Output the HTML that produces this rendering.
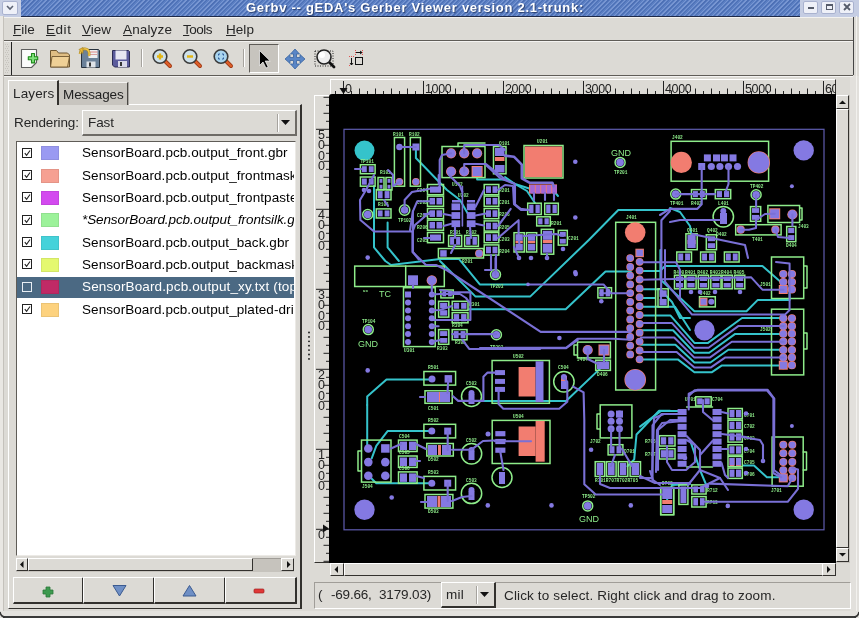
<!DOCTYPE html><html><head><meta charset="utf-8"><style>
*{margin:0;padding:0;box-sizing:border-box}
html,body{width:859px;height:618px;overflow:hidden;background:#dcdad5;font-family:"Liberation Sans",sans-serif;font-size:13.5px;color:#262626;position:relative}
.a{position:absolute;white-space:nowrap;will-change:transform}
.t{line-height:16px}
.bv{border:1px solid #fff;border-right-color:#6e6b66;border-bottom-color:#6e6b66}
.bi{border:1px solid #9d9a95;border-right-color:#fff;border-bottom-color:#fff}
u{text-decoration:underline;text-underline-offset:0.5px;text-decoration-thickness:1px}
</style></head><body><div class="a" style="left:0;top:0;width:859px;height:17px;background:#c5cde3"></div>
<div class="a" style="left:21px;top:0;width:779px;height:17px;background:repeating-linear-gradient(135deg,#5b7fc3 0 1.1px,#7896d2 1.1px 1.9px,#5b7fc3 1.9px 2.5px,#4d70b5 2.5px 3.3px);border-bottom:1px solid #1f2a48"></div>
<div class="a" style="left:4px;top:17px;width:849px;height:1px;background:#f3f2ef"></div>
<div class="a" style="left:2px;top:1px;width:16px;height:14px;background:#eef0f8;border:1px solid #a9b2cf;border-radius:2px"></div>
<svg class="a" style="left:0;top:0" width="22" height="16"><polyline points="7,6 10,9 13,6" fill="none" stroke="#5c6373" stroke-width="1.6"/></svg>
<div class="a" style="left:803px;top:1px;width:15px;height:13px;background:#eef0f8;border:1px solid #a9b2cf;border-radius:2px"></div>
<div class="a" style="left:821px;top:1px;width:15px;height:13px;background:#eef0f8;border:1px solid #a9b2cf;border-radius:2px"></div>
<div class="a" style="left:839px;top:1px;width:15px;height:13px;background:#eef0f8;border:1px solid #a9b2cf;border-radius:2px"></div>
<svg class="a" style="left:800px;top:0" width="59" height="16"><rect x="8" y="7" width="6" height="2" fill="#555b6a"/><rect x="26.5" y="4.5" width="6" height="5" fill="none" stroke="#555b6a" stroke-width="1"/><rect x="26" y="4" width="7" height="2" fill="#555b6a"/><path d="M44,4 L50,10 M50,4 L44,10" stroke="#555b6a" stroke-width="1.8"/></svg>
<div class="a" style="left:246px;top:0;font-weight:bold;font-size:13px;line-height:15px;color:#fff;letter-spacing:0.72px;text-shadow:1px 1px 1px #2b4070">Gerbv -- gEDA's Gerber Viewer version 2.1-trunk:</div>
<div class="a" style="left:0;top:16px;width:4px;height:602px;background:#e9e7e3;border-right:1px solid #c4c1bb"></div>
<div class="a" style="left:850px;top:76px;width:9px;height:542px;background:#e2e0dc"></div>
<div class="a" style="left:856px;top:16px;width:1px;height:600px;background:#f2f1ee"></div>
<div class="a" style="left:853px;top:17px;width:1px;height:58px;background:#444"></div>
<div class="a" style="left:0;top:611px;width:859px;height:7px;background:#e4e2de"></div>
<div class="a" style="left:3px;top:616px;width:853px;height:2px;background:#3a3a3a"></div>
<svg class="a" style="left:0;top:608px" width="859" height="10"><path d="M0,4 Q1,9 5,9" fill="none" stroke="#333" stroke-width="1.5"/><path d="M859,4 Q858,9 854,9" fill="none" stroke="#333" stroke-width="1.5"/></svg>
<div class="a" style="left:4px;top:40px;width:849px;height:1px;background:#5f5c57"></div>
<div class="a" style="left:4px;top:41px;width:849px;height:1px;background:#f4f3f1"></div>
<div class="a t" style="left:13px;top:21.6px;letter-spacing:-0.03px"><u>F</u>ile</div>
<div class="a t" style="left:46px;top:21.6px;letter-spacing:0.55px"><u>E</u>dit</div>
<div class="a t" style="left:82px;top:21.6px;letter-spacing:0.03px"><u>V</u>iew</div>
<div class="a t" style="left:123px;top:21.6px;letter-spacing:0.15px"><u>A</u>nalyze</div>
<div class="a t" style="left:183px;top:21.6px;letter-spacing:-0.49px"><u>T</u>ools</div>
<div class="a t" style="left:226px;top:21.6px;letter-spacing:0.05px"><u>H</u>elp</div>
<div class="a" style="left:11px;top:42px;width:1px;height:33px;background:#222"></div>
<div class="a" style="left:4px;top:75px;width:849px;height:1px;background:#5f5c57"></div>
<div class="a" style="left:4px;top:76px;width:849px;height:1px;background:#f4f3f1"></div>
<svg class="a" style="left:4px;top:43px" width="7" height="31"><rect x="1" y="1" width="1" height="1" fill="#c6c3bd"/><rect x="3" y="1" width="1" height="1" fill="#c6c3bd"/><rect x="2" y="3" width="1" height="1" fill="#c6c3bd"/><rect x="4" y="3" width="1" height="1" fill="#c6c3bd"/><rect x="1" y="5" width="1" height="1" fill="#c6c3bd"/><rect x="3" y="5" width="1" height="1" fill="#c6c3bd"/><rect x="2" y="7" width="1" height="1" fill="#c6c3bd"/><rect x="4" y="7" width="1" height="1" fill="#c6c3bd"/><rect x="1" y="9" width="1" height="1" fill="#c6c3bd"/><rect x="3" y="9" width="1" height="1" fill="#c6c3bd"/><rect x="2" y="11" width="1" height="1" fill="#c6c3bd"/><rect x="4" y="11" width="1" height="1" fill="#c6c3bd"/><rect x="1" y="13" width="1" height="1" fill="#c6c3bd"/><rect x="3" y="13" width="1" height="1" fill="#c6c3bd"/><rect x="2" y="15" width="1" height="1" fill="#c6c3bd"/><rect x="4" y="15" width="1" height="1" fill="#c6c3bd"/><rect x="1" y="17" width="1" height="1" fill="#c6c3bd"/><rect x="3" y="17" width="1" height="1" fill="#c6c3bd"/><rect x="2" y="19" width="1" height="1" fill="#c6c3bd"/><rect x="4" y="19" width="1" height="1" fill="#c6c3bd"/><rect x="1" y="21" width="1" height="1" fill="#c6c3bd"/><rect x="3" y="21" width="1" height="1" fill="#c6c3bd"/><rect x="2" y="23" width="1" height="1" fill="#c6c3bd"/><rect x="4" y="23" width="1" height="1" fill="#c6c3bd"/><rect x="1" y="25" width="1" height="1" fill="#c6c3bd"/><rect x="3" y="25" width="1" height="1" fill="#c6c3bd"/><rect x="2" y="27" width="1" height="1" fill="#c6c3bd"/><rect x="4" y="27" width="1" height="1" fill="#c6c3bd"/><rect x="1" y="29" width="1" height="1" fill="#c6c3bd"/><rect x="3" y="29" width="1" height="1" fill="#c6c3bd"/></svg>
<div class="a" style="left:141px;top:49px;width:1px;height:18px;background:#a6a39e;border-right:1px solid #fff;width:2px"></div>
<div class="a" style="left:243px;top:49px;width:1px;height:18px;background:#a6a39e;border-right:1px solid #fff;width:2px"></div>
<div class="a" style="left:249px;top:44px;width:30px;height:29px;background:#c7c4be;border:1px solid #5e5b57;border-right-color:#fff;border-bottom-color:#fff"></div>

<svg class="a" style="left:0;top:40px" width="380" height="36">
 <!-- new -->
 <path d="M21.5,9.5 h15 v13 l-5,5 h-10 z" fill="#fbfbfb" stroke="#5e5e5e" stroke-width="1.1" stroke-linejoin="round"/>
 <path d="M31.5,13.5 h3 v3.2 h3.2 v3 h-3.2 v3.2 h-3 v-3.2 h-3.2 v-3 h3.2 z" fill="#7ee07a" stroke="#1f8a1a" stroke-width="1.1" stroke-linejoin="round"/>
 <!-- open folder -->
 <path d="M50.5,10.5 h6 l2,2.5 h9 l2,2 v12 h-19 z" fill="#e0be84" stroke="#6e5630" stroke-width="1" stroke-linejoin="round"/>
 <path d="M52,16.5 h17.5 l-2,10.5 h-17 z" fill="#efd096" stroke="#6e5630" stroke-width="0.9" stroke-linejoin="round"/>
 <!-- revert -->
 <path d="M81.5,9.5 h17 l1,1 v17 h-18 z" fill="#6b8199" stroke="#28323e" stroke-width="1"/>
 <rect x="88.5" y="10" width="9" height="8" fill="#eeeef0"/>
 <rect x="88.5" y="11.5" width="9" height="1" fill="#d88"/>
 <rect x="88.5" y="14" width="9" height="1" fill="#d9a0a0"/>
 <rect x="86.5" y="21.5" width="9" height="6" fill="#dfe3e8"/>
 <rect x="89" y="22.5" width="2" height="4" fill="#333"/>
 <path d="M80,14 q1,-6 6,-5 q4,1 3,7" fill="none" stroke="#b08a20" stroke-width="2.6"/>
 <path d="M80,14 q1,-6 6,-5 q4,1 3,7" fill="none" stroke="#f0c850" stroke-width="1.4"/>
 <path d="M79,9.5 l4,-2 l0,6 z" fill="#e8b838" stroke="#a07818" stroke-width="0.6"/>
 <!-- save -->
 <path d="M112.5,10.5 h16 l1,1 v15.5 h-15 l-2,-2 z" fill="#5b5b9c" stroke="#2c2c54" stroke-width="1"/>
 <rect x="115.5" y="10.5" width="11" height="9" fill="#e6e6f2"/>
 <rect x="118" y="21" width="9" height="6" fill="#d8d8e8"/>
 <rect x="120" y="22" width="2" height="4" fill="#333"/>
 <!-- zoom in/out/fit -->
 <g id="z1">
  <line x1="165" y1="21" x2="170" y2="26" stroke="#a13b17" stroke-width="4" stroke-linecap="round"/>
  <line x1="165" y1="21" x2="170" y2="26" stroke="#e0602a" stroke-width="2.2" stroke-linecap="round"/>
  <circle cx="160" cy="16.5" r="6.8" fill="#cfe1ea" stroke="#3a3a3a" stroke-width="1.6"/>
  <path d="M157,16.5 h6 M160,13.5 v6" stroke="#e2b514" stroke-width="2.4"/>
 </g>
 <line x1="195" y1="21" x2="200" y2="26" stroke="#a13b17" stroke-width="4" stroke-linecap="round"/>
 <line x1="195" y1="21" x2="200" y2="26" stroke="#e0602a" stroke-width="2.2" stroke-linecap="round"/>
 <circle cx="190" cy="16.5" r="6.8" fill="#cfe1ea" stroke="#3a3a3a" stroke-width="1.6"/>
 <path d="M187,16.5 h6" stroke="#e2b514" stroke-width="2.4"/>
 <line x1="226" y1="21" x2="231" y2="26" stroke="#a13b17" stroke-width="4" stroke-linecap="round"/>
 <line x1="226" y1="21" x2="231" y2="26" stroke="#e0602a" stroke-width="2.2" stroke-linecap="round"/>
 <circle cx="221" cy="16.5" r="6.8" fill="#a9d4ee" stroke="#3a3a3a" stroke-width="1.6"/>
 <path d="M218.5,15.5 v-1.5 h1.5 M222,14 h1.5 v1.5 M223.5,17.5 v1.5 h-1.5 M220,19 h-1.5 v-1.5" fill="none" stroke="#2f5f9f" stroke-width="1"/>
 <!-- pointer -->
 <path d="M259.5,10.5 v15 l3.5,-3.5 l3,6 l2.2,-1 l-3,-6 h5 z" fill="#000" stroke="#fff" stroke-width="0.7"/>
 <!-- move -->
 <path d="M295,9 l4.5,5 h-3 v3.5 h3.5 v-3 l5,4.5 l-5,4.5 v-3 h-3.5 v3.5 h3 l-4.5,5 l-4.5,-5 h3 v-3.5 h-3.5 v3 l-5,-4.5 l5,-4.5 v3 h3.5 v-3.5 h-3 z" fill="#5a86c6" stroke="#3a64a0" stroke-width="0.8" stroke-linejoin="round"/>
 <!-- zoom area -->
 <rect x="315" y="11" width="18" height="15" fill="none" stroke="#222" stroke-width="1" stroke-dasharray="1,1.5"/>
 <line x1="329" y1="22" x2="334" y2="27" stroke="#111" stroke-width="2.8" stroke-linecap="round"/>
 <circle cx="324" cy="17" r="7" fill="#eeeeee" stroke="#222" stroke-width="1.6"/>
 <circle cx="322" cy="15" r="3" fill="#fff"/>
 <!-- measure -->
 <rect x="355.5" y="17.5" width="7" height="7" fill="none" stroke="#111" stroke-width="1"/>
 <path d="M356,12.5 h6 M360,11 l2,1.5 l-2,1.5" fill="none" stroke="#111" stroke-width="1"/>
 <path d="M351.5,18 v7 M350,23 l1.5,2 l1.5,-2" fill="none" stroke="#111" stroke-width="1"/>
 <path d="M355.5,10 v6 M362.5,10 v6 M349,16.5 h6 M349,25.5 h2" stroke="#e03030" stroke-width="0.8" stroke-dasharray="1,1"/>
</svg>

<div class="a" style="left:8px;top:104px;width:294px;height:505px;border:1px solid #fff;border-right-color:#33312e;border-bottom-color:#33312e;border-right-width:2px;border-bottom-width:1px"></div>
<div class="a" style="left:58px;top:82px;width:70px;height:23px;background:#c8c5bf;border-top:1px solid #f4f3f1;border-right:1px solid #4a4844;box-shadow:1px 0 0 #a8a5a0"></div>
<div class="a" style="left:8px;top:80px;width:51px;height:25px;background:#dcdad5;border-left:1px solid #fff;border-top:1px solid #fff;border-right:2px solid #33312e"></div>
<div class="a t" style="left:13px;top:85.5px;letter-spacing:0.15px">Layers</div>
<div class="a t" style="left:63px;top:86.5px;letter-spacing:-0.12px;color:#222">Messages</div>
<div class="a t" style="left:14px;top:114.8px;letter-spacing:-0.12px">Rendering:</div>
<div class="a bv" style="left:82px;top:110px;width:215px;height:26px;border-bottom-width:2px;border-right-width:2px"></div>
<div class="a t" style="left:88px;top:114.8px;letter-spacing:-0.12px">Fast</div>
<div class="a" style="left:277px;top:114px;height:18px;background:#a6a39e;border-right:1px solid #fff;width:2px"></div>
<svg class="a" style="left:280px;top:118px" width="12" height="8"><path d="M1,2 h9 l-4.5,5 z" fill="#111"/></svg>
<div class="a" style="left:16px;top:141px;width:280px;height:415px;background:#fff;border:1px solid #5f5c57;border-right-color:#eceae6;border-bottom-color:#eceae6"></div>
<div class="a" style="left:17px;top:277px;width:277px;height:21px;background:#4b6983"></div>
<div class="a" style="left:17px;top:141px;width:277px;height:414px;overflow:hidden">
<div class="a" style="left:5px;top:6.7px;width:10px;height:10px;border:1px solid #222;background:#fff"></div>
<svg class="a" style="left:5px;top:6.7px" width="10" height="10"><path d="M2.8,5.2 L4.6,7.4 L8,2.5" fill="none" stroke="#222" stroke-width="1.1"/></svg>
<div class="a" style="left:24px;top:5.3px;width:18px;height:14px;background:#9a9af2;border:1px solid rgba(0,0,0,0.07)"></div>
<div class="a t" style="left:65px;top:4.3px;color:#000;letter-spacing:0.07px;">SensorBoard.pcb.output_front.gbr</div>
<div class="a" style="left:5px;top:29.1px;width:10px;height:10px;border:1px solid #222;background:#fff"></div>
<svg class="a" style="left:5px;top:29.1px" width="10" height="10"><path d="M2.8,5.2 L4.6,7.4 L8,2.5" fill="none" stroke="#222" stroke-width="1.1"/></svg>
<div class="a" style="left:24px;top:27.7px;width:18px;height:14px;background:#f6a092;border:1px solid rgba(0,0,0,0.07)"></div>
<div class="a t" style="left:65px;top:26.7px;color:#000;letter-spacing:0.07px;">SensorBoard.pcb.output_frontmask.gbr</div>
<div class="a" style="left:5px;top:51.4px;width:10px;height:10px;border:1px solid #222;background:#fff"></div>
<svg class="a" style="left:5px;top:51.4px" width="10" height="10"><path d="M2.8,5.2 L4.6,7.4 L8,2.5" fill="none" stroke="#222" stroke-width="1.1"/></svg>
<div class="a" style="left:24px;top:50.0px;width:18px;height:14px;background:#d34aef;border:1px solid rgba(0,0,0,0.07)"></div>
<div class="a t" style="left:65px;top:49.0px;color:#000;letter-spacing:0.07px;">SensorBoard.pcb.output_frontpaste.gbr</div>
<div class="a" style="left:5px;top:73.8px;width:10px;height:10px;border:1px solid #222;background:#fff"></div>
<svg class="a" style="left:5px;top:73.8px" width="10" height="10"><path d="M2.8,5.2 L4.6,7.4 L8,2.5" fill="none" stroke="#222" stroke-width="1.1"/></svg>
<div class="a" style="left:24px;top:72.4px;width:18px;height:14px;background:#9cf29a;border:1px solid rgba(0,0,0,0.07)"></div>
<div class="a t" style="left:65px;top:71.4px;color:#000;letter-spacing:-0.1px;font-style:italic;">*SensorBoard.pcb.output_frontsilk.gbr</div>
<div class="a" style="left:5px;top:96.1px;width:10px;height:10px;border:1px solid #222;background:#fff"></div>
<svg class="a" style="left:5px;top:96.1px" width="10" height="10"><path d="M2.8,5.2 L4.6,7.4 L8,2.5" fill="none" stroke="#222" stroke-width="1.1"/></svg>
<div class="a" style="left:24px;top:94.7px;width:18px;height:14px;background:#45d2da;border:1px solid rgba(0,0,0,0.07)"></div>
<div class="a t" style="left:65px;top:93.7px;color:#000;letter-spacing:0.07px;">SensorBoard.pcb.output_back.gbr</div>
<div class="a" style="left:5px;top:118.4px;width:10px;height:10px;border:1px solid #222;background:#fff"></div>
<svg class="a" style="left:5px;top:118.4px" width="10" height="10"><path d="M2.8,5.2 L4.6,7.4 L8,2.5" fill="none" stroke="#222" stroke-width="1.1"/></svg>
<div class="a" style="left:24px;top:117.1px;width:18px;height:14px;background:#e4f86e;border:1px solid rgba(0,0,0,0.07)"></div>
<div class="a t" style="left:65px;top:116.1px;color:#000;letter-spacing:0.07px;">SensorBoard.pcb.output_backmask.gbr</div>
<div class="a" style="left:5px;top:140.8px;width:10px;height:10px;border:1px solid #e8eef4;background:#4b6983"></div>
<div class="a" style="left:24px;top:139.4px;width:18px;height:14px;background:#c02a66;border:1px solid rgba(0,0,0,0.07)"></div>
<div class="a t" style="left:65px;top:138.4px;color:#fff;letter-spacing:0.13px;">SensorBoard.pcb.output_xy.txt (top)</div>
<div class="a" style="left:5px;top:163.1px;width:10px;height:10px;border:1px solid #222;background:#fff"></div>
<svg class="a" style="left:5px;top:163.1px" width="10" height="10"><path d="M2.8,5.2 L4.6,7.4 L8,2.5" fill="none" stroke="#222" stroke-width="1.1"/></svg>
<div class="a" style="left:24px;top:161.8px;width:18px;height:14px;background:#fdd27e;border:1px solid rgba(0,0,0,0.07)"></div>
<div class="a t" style="left:65px;top:160.8px;color:#000;letter-spacing:0.07px;">SensorBoard.pcb.output_plated-drill.cnc</div>
</div>
<div class="a" style="left:16px;top:558px;width:278px;height:14px;background:#c6c3bd;border-top:1px solid #a09d98"></div>
<div class="a bv" style="left:16px;top:558px;width:12px;height:13px;background:#dcdad5;border-right-color:#33312e;border-bottom-color:#33312e"></div>
<div class="a bv" style="left:28px;top:558px;width:225px;height:13px;background:#dcdad5;border-right-color:#33312e;border-bottom-color:#33312e"></div>
<div class="a bv" style="left:281px;top:558px;width:13px;height:13px;background:#dcdad5;border-right-color:#33312e;border-bottom-color:#33312e"></div>
<svg class="a" style="left:16px;top:558px" width="278" height="13"><path d="M7.5,3 v7 l-3.5,-3.5 z" fill="#111"/><path d="M271,3 v7 l3.5,-3.5 z" fill="#111"/></svg>
<div class="a bv" style="left:13px;top:577px;width:71px;height:27px;border-right-color:#33312e;border-bottom-color:#33312e;border-bottom-width:2px;border-right-width:2px"></div>
<div class="a bv" style="left:83px;top:577px;width:72px;height:27px;border-right-color:#33312e;border-bottom-color:#33312e;border-bottom-width:2px;border-right-width:2px"></div>
<div class="a bv" style="left:154px;top:577px;width:72px;height:27px;border-right-color:#33312e;border-bottom-color:#33312e;border-bottom-width:2px;border-right-width:2px"></div>
<div class="a bv" style="left:225px;top:577px;width:72px;height:27px;border-right-color:#33312e;border-bottom-color:#33312e;border-bottom-width:2px;border-right-width:2px"></div>
<svg class="a" style="left:13px;top:577px" width="285" height="27"><path d="M33,10 h4 v3 h3 v4 h-3 v3 h-4 v-3 h-3 v-4 h3 z" fill="#3d9a4f" stroke="#2b7a3a" stroke-width="0.8"/><path d="M100,8.5 h13 l-6.5,10.5 z" fill="#6f8fc5" stroke="#3b5a90" stroke-width="1"/><path d="M170,19 h13 l-6.5,-10.5 z" fill="#6f8fc5" stroke="#3b5a90" stroke-width="1"/><rect x="241" y="12" width="10" height="4" rx="1" fill="#e03838" stroke="#a02020" stroke-width="0.7"/></svg>
<svg class="a" style="left:305px;top:330px" width="8" height="34"><circle cx="4" cy="2.5" r="0.9" fill="#111"/><circle cx="4" cy="6.9" r="0.9" fill="#111"/><circle cx="4" cy="11.3" r="0.9" fill="#111"/><circle cx="4" cy="15.7" r="0.9" fill="#111"/><circle cx="4" cy="20.1" r="0.9" fill="#111"/><circle cx="4" cy="24.5" r="0.9" fill="#111"/><circle cx="4" cy="28.9" r="0.9" fill="#111"/></svg>
<div class="a" style="left:329px;top:94px;width:507px;height:469px;background:#000;border-radius:3px 0 0 0"></div>
<div class="a" style="left:330px;top:79px;width:506px;height:15px;background:#dcdad5;border-top:1px solid #fff;border-left:1px solid #fff;border-right:1px solid #33312e"></div>
<div class="a" style="left:314px;top:95px;width:15px;height:468px;background:#dcdad5;border-left:1px solid #fff;border-top:1px solid #fff;border-bottom:1px solid #33312e"></div>
<div class="a" style="left:836px;top:95px;width:14px;height:468px;background:#c6c3bd"></div>
<div class="a bv" style="left:836px;top:95px;width:13px;height:14px;background:#dcdad5;border-right-color:#33312e;border-bottom-color:#33312e"></div>
<div class="a bv" style="left:836px;top:109px;width:13px;height:439px;background:#dcdad5;border-right-color:#33312e;border-bottom-color:#33312e"></div>
<div class="a bv" style="left:836px;top:548px;width:13px;height:14px;background:#dcdad5;border-right-color:#33312e;border-bottom-color:#33312e"></div>
<svg class="a" style="left:836px;top:95px" width="14" height="468"><path d="M3,9 h7 l-3.5,-3.5 z" fill="#111"/><path d="M3,458 h7 l-3.5,3.5 z" fill="#111"/></svg>
<div class="a" style="left:330px;top:563px;width:506px;height:13px;background:#c6c3bd"></div>
<div class="a bv" style="left:330px;top:563px;width:14px;height:13px;background:#dcdad5;border-right-color:#33312e;border-bottom-color:#33312e"></div>
<div class="a bv" style="left:344px;top:563px;width:479px;height:13px;background:#dcdad5;border-right-color:#33312e;border-bottom-color:#33312e"></div>
<div class="a bv" style="left:822px;top:563px;width:14px;height:13px;background:#dcdad5;border-right-color:#33312e;border-bottom-color:#33312e"></div>
<svg class="a" style="left:330px;top:563px" width="506" height="13"><path d="M8,3 v7 l-3.5,-3.5 z" fill="#111"/><path d="M497,3 v7 l3.5,-3.5 z" fill="#111"/></svg>
<svg class="a" style="left:330px;top:79px" width="506" height="15"><line x1="5.5" y1="12" x2="5.5" y2="15" stroke="#222" stroke-width="1"/><line x1="13.5" y1="2" x2="13.5" y2="15" stroke="#222" stroke-width="1"/><line x1="21.5" y1="12" x2="21.5" y2="15" stroke="#222" stroke-width="1"/><line x1="29.5" y1="9.5" x2="29.5" y2="15" stroke="#222" stroke-width="1"/><line x1="37.5" y1="12" x2="37.5" y2="15" stroke="#222" stroke-width="1"/><line x1="45.5" y1="9.5" x2="45.5" y2="15" stroke="#222" stroke-width="1"/><line x1="53.5" y1="12" x2="53.5" y2="15" stroke="#222" stroke-width="1"/><line x1="61.5" y1="9.5" x2="61.5" y2="15" stroke="#222" stroke-width="1"/><line x1="69.5" y1="12" x2="69.5" y2="15" stroke="#222" stroke-width="1"/><line x1="77.5" y1="9.5" x2="77.5" y2="15" stroke="#222" stroke-width="1"/><line x1="85.5" y1="12" x2="85.5" y2="15" stroke="#222" stroke-width="1"/><line x1="93.5" y1="2" x2="93.5" y2="15" stroke="#222" stroke-width="1"/><line x1="101.5" y1="12" x2="101.5" y2="15" stroke="#222" stroke-width="1"/><line x1="109.5" y1="9.5" x2="109.5" y2="15" stroke="#222" stroke-width="1"/><line x1="117.5" y1="12" x2="117.5" y2="15" stroke="#222" stroke-width="1"/><line x1="125.5" y1="9.5" x2="125.5" y2="15" stroke="#222" stroke-width="1"/><line x1="133.5" y1="12" x2="133.5" y2="15" stroke="#222" stroke-width="1"/><line x1="141.5" y1="9.5" x2="141.5" y2="15" stroke="#222" stroke-width="1"/><line x1="149.5" y1="12" x2="149.5" y2="15" stroke="#222" stroke-width="1"/><line x1="157.5" y1="9.5" x2="157.5" y2="15" stroke="#222" stroke-width="1"/><line x1="165.5" y1="12" x2="165.5" y2="15" stroke="#222" stroke-width="1"/><line x1="173.5" y1="2" x2="173.5" y2="15" stroke="#222" stroke-width="1"/><line x1="181.5" y1="12" x2="181.5" y2="15" stroke="#222" stroke-width="1"/><line x1="189.5" y1="9.5" x2="189.5" y2="15" stroke="#222" stroke-width="1"/><line x1="197.5" y1="12" x2="197.5" y2="15" stroke="#222" stroke-width="1"/><line x1="205.5" y1="9.5" x2="205.5" y2="15" stroke="#222" stroke-width="1"/><line x1="213.5" y1="12" x2="213.5" y2="15" stroke="#222" stroke-width="1"/><line x1="221.5" y1="9.5" x2="221.5" y2="15" stroke="#222" stroke-width="1"/><line x1="229.5" y1="12" x2="229.5" y2="15" stroke="#222" stroke-width="1"/><line x1="237.5" y1="9.5" x2="237.5" y2="15" stroke="#222" stroke-width="1"/><line x1="245.5" y1="12" x2="245.5" y2="15" stroke="#222" stroke-width="1"/><line x1="253.5" y1="2" x2="253.5" y2="15" stroke="#222" stroke-width="1"/><line x1="261.5" y1="12" x2="261.5" y2="15" stroke="#222" stroke-width="1"/><line x1="269.5" y1="9.5" x2="269.5" y2="15" stroke="#222" stroke-width="1"/><line x1="277.5" y1="12" x2="277.5" y2="15" stroke="#222" stroke-width="1"/><line x1="285.5" y1="9.5" x2="285.5" y2="15" stroke="#222" stroke-width="1"/><line x1="293.5" y1="12" x2="293.5" y2="15" stroke="#222" stroke-width="1"/><line x1="301.5" y1="9.5" x2="301.5" y2="15" stroke="#222" stroke-width="1"/><line x1="309.5" y1="12" x2="309.5" y2="15" stroke="#222" stroke-width="1"/><line x1="317.5" y1="9.5" x2="317.5" y2="15" stroke="#222" stroke-width="1"/><line x1="325.5" y1="12" x2="325.5" y2="15" stroke="#222" stroke-width="1"/><line x1="333.5" y1="2" x2="333.5" y2="15" stroke="#222" stroke-width="1"/><line x1="341.5" y1="12" x2="341.5" y2="15" stroke="#222" stroke-width="1"/><line x1="349.5" y1="9.5" x2="349.5" y2="15" stroke="#222" stroke-width="1"/><line x1="357.5" y1="12" x2="357.5" y2="15" stroke="#222" stroke-width="1"/><line x1="365.5" y1="9.5" x2="365.5" y2="15" stroke="#222" stroke-width="1"/><line x1="373.5" y1="12" x2="373.5" y2="15" stroke="#222" stroke-width="1"/><line x1="381.5" y1="9.5" x2="381.5" y2="15" stroke="#222" stroke-width="1"/><line x1="389.5" y1="12" x2="389.5" y2="15" stroke="#222" stroke-width="1"/><line x1="397.5" y1="9.5" x2="397.5" y2="15" stroke="#222" stroke-width="1"/><line x1="405.5" y1="12" x2="405.5" y2="15" stroke="#222" stroke-width="1"/><line x1="413.5" y1="2" x2="413.5" y2="15" stroke="#222" stroke-width="1"/><line x1="421.5" y1="12" x2="421.5" y2="15" stroke="#222" stroke-width="1"/><line x1="429.5" y1="9.5" x2="429.5" y2="15" stroke="#222" stroke-width="1"/><line x1="437.5" y1="12" x2="437.5" y2="15" stroke="#222" stroke-width="1"/><line x1="445.5" y1="9.5" x2="445.5" y2="15" stroke="#222" stroke-width="1"/><line x1="453.5" y1="12" x2="453.5" y2="15" stroke="#222" stroke-width="1"/><line x1="461.5" y1="9.5" x2="461.5" y2="15" stroke="#222" stroke-width="1"/><line x1="469.5" y1="12" x2="469.5" y2="15" stroke="#222" stroke-width="1"/><line x1="477.5" y1="9.5" x2="477.5" y2="15" stroke="#222" stroke-width="1"/><line x1="485.5" y1="12" x2="485.5" y2="15" stroke="#222" stroke-width="1"/><line x1="493.5" y1="2" x2="493.5" y2="15" stroke="#222" stroke-width="1"/><line x1="501.5" y1="12" x2="501.5" y2="15" stroke="#222" stroke-width="1"/></svg>
<div class="a" style="left:345.0px;top:83.3px;font-size:12.5px;line-height:12px;letter-spacing:-0.35px;color:#222;overflow:hidden;max-width:491px">0</div>
<div class="a" style="left:425.0px;top:83.3px;font-size:12.5px;line-height:12px;letter-spacing:-0.35px;color:#222;overflow:hidden;max-width:411px">1000</div>
<div class="a" style="left:505.0px;top:83.3px;font-size:12.5px;line-height:12px;letter-spacing:-0.35px;color:#222;overflow:hidden;max-width:331px">2000</div>
<div class="a" style="left:585.0px;top:83.3px;font-size:12.5px;line-height:12px;letter-spacing:-0.35px;color:#222;overflow:hidden;max-width:251px">3000</div>
<div class="a" style="left:665.0px;top:83.3px;font-size:12.5px;line-height:12px;letter-spacing:-0.35px;color:#222;overflow:hidden;max-width:171px">4000</div>
<div class="a" style="left:745.0px;top:83.3px;font-size:12.5px;line-height:12px;letter-spacing:-0.35px;color:#222;overflow:hidden;max-width:91px">5000</div>
<div class="a" style="left:825.0px;top:83.3px;font-size:12.5px;line-height:12px;letter-spacing:-0.35px;color:#222;overflow:hidden;max-width:11px">6000</div>
<svg class="a" style="left:338px;top:87px" width="12" height="8"><path d="M1.5,1 h8 l-4,6 z" fill="#111"/></svg>
<svg class="a" style="left:314px;top:95px" width="15" height="468"><line x1="9.5" y1="466.3" x2="15" y2="466.3" stroke="#222" stroke-width="1"/><line x1="12" y1="458.3" x2="15" y2="458.3" stroke="#222" stroke-width="1"/><line x1="9.5" y1="450.3" x2="15" y2="450.3" stroke="#222" stroke-width="1"/><line x1="12" y1="442.3" x2="15" y2="442.3" stroke="#222" stroke-width="1"/><line x1="2" y1="434.3" x2="15" y2="434.3" stroke="#222" stroke-width="1"/><line x1="12" y1="426.3" x2="15" y2="426.3" stroke="#222" stroke-width="1"/><line x1="9.5" y1="418.3" x2="15" y2="418.3" stroke="#222" stroke-width="1"/><line x1="12" y1="410.3" x2="15" y2="410.3" stroke="#222" stroke-width="1"/><line x1="9.5" y1="402.3" x2="15" y2="402.3" stroke="#222" stroke-width="1"/><line x1="12" y1="394.3" x2="15" y2="394.3" stroke="#222" stroke-width="1"/><line x1="9.5" y1="386.3" x2="15" y2="386.3" stroke="#222" stroke-width="1"/><line x1="12" y1="378.3" x2="15" y2="378.3" stroke="#222" stroke-width="1"/><line x1="9.5" y1="370.3" x2="15" y2="370.3" stroke="#222" stroke-width="1"/><line x1="12" y1="362.3" x2="15" y2="362.3" stroke="#222" stroke-width="1"/><line x1="2" y1="354.3" x2="15" y2="354.3" stroke="#222" stroke-width="1"/><line x1="12" y1="346.3" x2="15" y2="346.3" stroke="#222" stroke-width="1"/><line x1="9.5" y1="338.3" x2="15" y2="338.3" stroke="#222" stroke-width="1"/><line x1="12" y1="330.3" x2="15" y2="330.3" stroke="#222" stroke-width="1"/><line x1="9.5" y1="322.3" x2="15" y2="322.3" stroke="#222" stroke-width="1"/><line x1="12" y1="314.3" x2="15" y2="314.3" stroke="#222" stroke-width="1"/><line x1="9.5" y1="306.3" x2="15" y2="306.3" stroke="#222" stroke-width="1"/><line x1="12" y1="298.3" x2="15" y2="298.3" stroke="#222" stroke-width="1"/><line x1="9.5" y1="290.3" x2="15" y2="290.3" stroke="#222" stroke-width="1"/><line x1="12" y1="282.3" x2="15" y2="282.3" stroke="#222" stroke-width="1"/><line x1="2" y1="274.3" x2="15" y2="274.3" stroke="#222" stroke-width="1"/><line x1="12" y1="266.3" x2="15" y2="266.3" stroke="#222" stroke-width="1"/><line x1="9.5" y1="258.3" x2="15" y2="258.3" stroke="#222" stroke-width="1"/><line x1="12" y1="250.3" x2="15" y2="250.3" stroke="#222" stroke-width="1"/><line x1="9.5" y1="242.3" x2="15" y2="242.3" stroke="#222" stroke-width="1"/><line x1="12" y1="234.3" x2="15" y2="234.3" stroke="#222" stroke-width="1"/><line x1="9.5" y1="226.3" x2="15" y2="226.3" stroke="#222" stroke-width="1"/><line x1="12" y1="218.3" x2="15" y2="218.3" stroke="#222" stroke-width="1"/><line x1="9.5" y1="210.3" x2="15" y2="210.3" stroke="#222" stroke-width="1"/><line x1="12" y1="202.3" x2="15" y2="202.3" stroke="#222" stroke-width="1"/><line x1="2" y1="194.3" x2="15" y2="194.3" stroke="#222" stroke-width="1"/><line x1="12" y1="186.3" x2="15" y2="186.3" stroke="#222" stroke-width="1"/><line x1="9.5" y1="178.3" x2="15" y2="178.3" stroke="#222" stroke-width="1"/><line x1="12" y1="170.3" x2="15" y2="170.3" stroke="#222" stroke-width="1"/><line x1="9.5" y1="162.3" x2="15" y2="162.3" stroke="#222" stroke-width="1"/><line x1="12" y1="154.3" x2="15" y2="154.3" stroke="#222" stroke-width="1"/><line x1="9.5" y1="146.3" x2="15" y2="146.3" stroke="#222" stroke-width="1"/><line x1="12" y1="138.3" x2="15" y2="138.3" stroke="#222" stroke-width="1"/><line x1="9.5" y1="130.3" x2="15" y2="130.3" stroke="#222" stroke-width="1"/><line x1="12" y1="122.3" x2="15" y2="122.3" stroke="#222" stroke-width="1"/><line x1="2" y1="114.3" x2="15" y2="114.3" stroke="#222" stroke-width="1"/><line x1="12" y1="106.3" x2="15" y2="106.3" stroke="#222" stroke-width="1"/><line x1="9.5" y1="98.3" x2="15" y2="98.3" stroke="#222" stroke-width="1"/><line x1="12" y1="90.3" x2="15" y2="90.3" stroke="#222" stroke-width="1"/><line x1="9.5" y1="82.3" x2="15" y2="82.3" stroke="#222" stroke-width="1"/><line x1="12" y1="74.3" x2="15" y2="74.3" stroke="#222" stroke-width="1"/><line x1="9.5" y1="66.3" x2="15" y2="66.3" stroke="#222" stroke-width="1"/><line x1="12" y1="58.3" x2="15" y2="58.3" stroke="#222" stroke-width="1"/><line x1="9.5" y1="50.3" x2="15" y2="50.3" stroke="#222" stroke-width="1"/><line x1="12" y1="42.3" x2="15" y2="42.3" stroke="#222" stroke-width="1"/><line x1="2" y1="34.3" x2="15" y2="34.3" stroke="#222" stroke-width="1"/><line x1="12" y1="26.3" x2="15" y2="26.3" stroke="#222" stroke-width="1"/><line x1="9.5" y1="18.3" x2="15" y2="18.3" stroke="#222" stroke-width="1"/><line x1="12" y1="10.3" x2="15" y2="10.3" stroke="#222" stroke-width="1"/><line x1="9.5" y1="2.3" x2="15" y2="2.3" stroke="#222" stroke-width="1"/></svg>
<div class="a" style="left:316.5px;top:530.4px;font-size:12.5px;line-height:10.4px;color:#222;width:9px;text-align:center;white-space:normal">0</div>
<div class="a" style="left:316.5px;top:450.4px;font-size:12.5px;line-height:10.4px;color:#222;width:9px;text-align:center;white-space:normal">1<br>0<br>0<br>0</div>
<div class="a" style="left:316.5px;top:370.4px;font-size:12.5px;line-height:10.4px;color:#222;width:9px;text-align:center;white-space:normal">2<br>0<br>0<br>0</div>
<div class="a" style="left:316.5px;top:290.4px;font-size:12.5px;line-height:10.4px;color:#222;width:9px;text-align:center;white-space:normal">3<br>0<br>0<br>0</div>
<div class="a" style="left:316.5px;top:210.4px;font-size:12.5px;line-height:10.4px;color:#222;width:9px;text-align:center;white-space:normal">4<br>0<br>0<br>0</div>
<div class="a" style="left:316.5px;top:130.4px;font-size:12.5px;line-height:10.4px;color:#222;width:9px;text-align:center;white-space:normal">5<br>0<br>0<br>0</div>
<svg class="a" style="left:322px;top:523px" width="8" height="12"><path d="M1,1.5 v8 l6,-4 z" fill="#111"/></svg>
<div class="a bi" style="left:314px;top:582px;width:537px;height:27px;border-color:#a09d98;border-right-color:#fff;border-bottom-color:#fff"></div>
<div class="a t" style="left:318px;top:587px">(</div>
<div class="a t" style="left:331px;top:587px;letter-spacing:-0.2px">-69.66,</div>
<div class="a t" style="left:379px;top:587px;letter-spacing:-0.15px">3179.03)</div>
<div class="a bv" style="left:441px;top:582px;width:55px;height:26px;border-right-color:#33312e;border-bottom-color:#33312e;border-right-width:2px;border-bottom-width:2px"></div>
<div class="a t" style="left:446px;top:587px;letter-spacing:0.3px">mil</div>
<div class="a" style="left:476px;top:586px;width:2px;height:18px;background:#a6a39e;border-right:1px solid #fff"></div>
<svg class="a" style="left:479px;top:591px" width="12" height="8"><path d="M1,1 h9 l-4.5,5 z" fill="#111"/></svg>
<div class="a t" style="left:504px;top:587.5px;letter-spacing:0.145px">Click to select. Right click and drag to zoom.</div>
<svg class="a" style="left:329px;top:94px" width="507" height="469" viewBox="329 94 507 469">
<circle cx="364.5" cy="150.6" r="10.0" fill="#35c3cb"/>
<polyline points="415.9,150.0 415.9,158.0 447.0,190.0 460.0,200.0 468.0,214.0" fill="none" stroke="#35c3cb" stroke-width="2.0" stroke-linejoin="round" stroke-linecap="round"/>
<polyline points="477.1,171.5 477.1,179.4 505.0,179.4 515.0,184.0 527.0,191.0 535.0,203.0" fill="none" stroke="#35c3cb" stroke-width="2.0" stroke-linejoin="round" stroke-linecap="round"/>
<polyline points="374.0,186.0 374.0,247.4 385.3,261.0 391.0,265.0 440.0,258.9 458.9,258.9 479.8,284.4 528.0,284.4" fill="none" stroke="#35c3cb" stroke-width="2.0" stroke-linejoin="round" stroke-linecap="round"/>
<polyline points="440.0,261.0 475.6,296.6 530.1,296.6 588.8,240.0 618.3,210.0 670.0,210.0" fill="none" stroke="#35c3cb" stroke-width="2.0" stroke-linejoin="round" stroke-linecap="round"/>
<polyline points="387.6,222.5 387.6,247.4 398.9,261.0" fill="none" stroke="#35c3cb" stroke-width="2.0" stroke-linejoin="round" stroke-linecap="round"/>
<polyline points="469.3,309.2 565.7,309.2 605.5,271.4 630.8,271.4" fill="none" stroke="#35c3cb" stroke-width="2.0" stroke-linejoin="round" stroke-linecap="round"/>
<polyline points="505.0,177.0 515.0,184.0 534.0,190.0 553.0,190.0 558.0,196.0" fill="none" stroke="#35c3cb" stroke-width="2.0" stroke-linejoin="round" stroke-linecap="round"/>
<polyline points="670.0,208.0 680.0,212.0 690.0,226.0 692.0,238.0" fill="none" stroke="#35c3cb" stroke-width="2.0" stroke-linejoin="round" stroke-linecap="round"/>
<polyline points="641.0,315.6 670.6,315.6 694.4,342.9 708.0,342.9 742.0,318.0 783.5,318.0" fill="none" stroke="#35c3cb" stroke-width="2.0" stroke-linejoin="round" stroke-linecap="round"/>
<polyline points="641.0,330.2 673.0,330.2 694.4,352.7 709.2,352.7 735.2,333.9 783.5,333.9" fill="none" stroke="#35c3cb" stroke-width="2.0" stroke-linejoin="round" stroke-linecap="round"/>
<polyline points="641.0,344.8 675.4,344.8 694.4,362.5 710.4,362.5 728.4,349.7 783.5,349.7" fill="none" stroke="#35c3cb" stroke-width="2.0" stroke-linejoin="round" stroke-linecap="round"/>
<polyline points="641.0,359.4 677.8,359.4 694.4,372.3 711.6,372.3 721.6,365.6 783.5,365.6" fill="none" stroke="#35c3cb" stroke-width="2.0" stroke-linejoin="round" stroke-linecap="round"/>
<polyline points="641.0,271.0 660.0,271.0 665.0,266.0 762.4,265.9 780.5,281.7" fill="none" stroke="#35c3cb" stroke-width="2.0" stroke-linejoin="round" stroke-linecap="round"/>
<polyline points="660.4,250.0 660.4,279.5 694.4,311.2 746.5,311.2 757.8,299.9 789.6,299.9 789.6,284.0" fill="none" stroke="#35c3cb" stroke-width="2.0" stroke-linejoin="round" stroke-linecap="round"/>
<polyline points="641.0,289.3 660.0,289.3 672.0,302.0 680.0,318.0 690.0,318.0" fill="none" stroke="#35c3cb" stroke-width="2.0" stroke-linejoin="round" stroke-linecap="round"/>
<polyline points="641.0,298.1 655.0,298.1" fill="none" stroke="#35c3cb" stroke-width="2.0" stroke-linejoin="round" stroke-linecap="round"/>
<polyline points="641.0,306.8 675.0,306.8 690.0,330.0" fill="none" stroke="#35c3cb" stroke-width="2.0" stroke-linejoin="round" stroke-linecap="round"/>
<polyline points="472.9,400.9 566.1,401.0 606.9,362.1" fill="none" stroke="#35c3cb" stroke-width="2.0" stroke-linejoin="round" stroke-linecap="round"/>
<polyline points="367.2,405.0 367.2,396.5 386.5,379.5 431.8,379.5" fill="none" stroke="#35c3cb" stroke-width="2.0" stroke-linejoin="round" stroke-linecap="round"/>
<polyline points="367.2,405.0 367.2,444.7" fill="none" stroke="#35c3cb" stroke-width="2.0" stroke-linejoin="round" stroke-linecap="round"/>
<polyline points="371.7,458.3 376.3,445.8 387.6,431.1 431.8,431.1" fill="none" stroke="#35c3cb" stroke-width="2.0" stroke-linejoin="round" stroke-linecap="round"/>
<polyline points="371.7,478.7 376.3,483.2 431.8,483.2" fill="none" stroke="#35c3cb" stroke-width="2.0" stroke-linejoin="round" stroke-linecap="round"/>
<polyline points="670.0,410.7 659.1,410.7 636.5,434.5 634.2,459.4 627.4,466.2" fill="none" stroke="#35c3cb" stroke-width="2.0" stroke-linejoin="round" stroke-linecap="round"/>
<polyline points="743.6,465.5 754.0,465.5 766.9,477.2 781.2,477.2" fill="none" stroke="#35c3cb" stroke-width="2.0" stroke-linejoin="round" stroke-linecap="round"/>
<polyline points="640.0,426.6 660.7,411.1 677.6,411.1" fill="none" stroke="#35c3cb" stroke-width="2.0" stroke-linejoin="round" stroke-linecap="round"/>
<polyline points="690.0,440.0 700.0,470.0 706.9,486.5" fill="none" stroke="#35c3cb" stroke-width="2.0" stroke-linejoin="round" stroke-linecap="round"/>
<polyline points="667.0,500.0 672.0,485.0 690.0,484.0" fill="none" stroke="#35c3cb" stroke-width="2.0" stroke-linejoin="round" stroke-linecap="round"/>
<rect x="394.4" y="137.5" width="10.2" height="48.7" fill="none" stroke="#8eec8a" stroke-width="1.5"/>
<text x="393.0" y="136.0" font-size="4.5" fill="#8eec8a" font-family="Liberation Mono" font-weight="bold">R101</text>
<rect x="410.3" y="137.5" width="10.2" height="48.7" fill="none" stroke="#8eec8a" stroke-width="1.5"/>
<text x="409.0" y="136.0" font-size="4.5" fill="#8eec8a" font-family="Liberation Mono" font-weight="bold">R102</text>
<rect x="442.0" y="146.5" width="43.0" height="31.1" fill="none" stroke="#8eec8a" stroke-width="1.5"/>
<polyline points="458.0,146.5 458.0,143.0 485.0,143.0" fill="none" stroke="#8eec8a" stroke-width="1.5" stroke-linejoin="round" stroke-linecap="round"/>
<text x="452.0" y="186.0" font-size="4.5" fill="#8eec8a" font-family="Liberation Mono" font-weight="bold">U102</text>
<rect x="360.4" y="164.7" width="14.7" height="9.0" fill="none" stroke="#8eec8a" stroke-width="1.5"/>
<text x="360.4" y="163.2" font-size="4.5" fill="#8eec8a" font-family="Liberation Mono" font-weight="bold">TP101</text>
<rect x="360.4" y="177.0" width="14.7" height="9.2" fill="none" stroke="#8eec8a" stroke-width="1.5"/>
<rect x="378.0" y="177.5" width="6.0" height="12.5" fill="none" stroke="#8eec8a" stroke-width="1.5"/>
<rect x="386.0" y="177.5" width="6.0" height="12.5" fill="none" stroke="#8eec8a" stroke-width="1.5"/>
<text x="380.0" y="174.0" font-size="4.5" fill="#8eec8a" font-family="Liberation Mono" font-weight="bold">R103</text>
<rect x="376.3" y="189.6" width="14.7" height="10.2" fill="none" stroke="#8eec8a" stroke-width="1.5"/>
<rect x="376.3" y="208.9" width="14.7" height="9.1" fill="none" stroke="#8eec8a" stroke-width="1.5"/>
<text x="378.0" y="206.0" font-size="4.5" fill="#8eec8a" font-family="Liberation Mono" font-weight="bold">R104</text>
<circle cx="367.7" cy="214.5" r="5.0" fill="none" stroke="#8eec8a" stroke-width="1.5"/>
<circle cx="404.6" cy="210.0" r="5.2" fill="none" stroke="#8eec8a" stroke-width="1.5"/>
<text x="398.0" y="222.0" font-size="4.5" fill="#8eec8a" font-family="Liberation Mono" font-weight="bold">TP102</text>
<circle cx="495.5" cy="274.6" r="5.0" fill="none" stroke="#8eec8a" stroke-width="1.5"/>
<text x="490.0" y="288.0" font-size="4.5" fill="#8eec8a" font-family="Liberation Mono" font-weight="bold">TP203</text>
<rect x="427.5" y="184.5" width="16.0" height="10.2" fill="none" stroke="#8eec8a" stroke-width="1.5"/>
<rect x="427.5" y="196.1" width="16.0" height="10.2" fill="none" stroke="#8eec8a" stroke-width="1.5"/>
<rect x="427.5" y="208.5" width="16.0" height="10.2" fill="none" stroke="#8eec8a" stroke-width="1.5"/>
<rect x="427.5" y="220.1" width="16.0" height="10.2" fill="none" stroke="#8eec8a" stroke-width="1.5"/>
<rect x="427.5" y="232.5" width="16.0" height="10.2" fill="none" stroke="#8eec8a" stroke-width="1.5"/>
<text x="417.0" y="192.0" font-size="4.5" fill="#8eec8a" font-family="Liberation Mono" font-weight="bold">C204</text>
<text x="417.0" y="204.0" font-size="4.5" fill="#8eec8a" font-family="Liberation Mono" font-weight="bold">C202</text>
<text x="417.0" y="217.0" font-size="4.5" fill="#8eec8a" font-family="Liberation Mono" font-weight="bold">C203</text>
<text x="417.0" y="229.0" font-size="4.5" fill="#8eec8a" font-family="Liberation Mono" font-weight="bold">R206</text>
<text x="417.0" y="242.0" font-size="4.5" fill="#8eec8a" font-family="Liberation Mono" font-weight="bold">C205</text>
<text x="458.0" y="197.0" font-size="4.5" fill="#8eec8a" font-family="Liberation Mono" font-weight="bold">U202</text>
<rect x="448.6" y="235.4" width="13.1" height="10.9" fill="none" stroke="#8eec8a" stroke-width="1.5"/>
<rect x="464.6" y="235.4" width="13.8" height="10.9" fill="none" stroke="#8eec8a" stroke-width="1.5"/>
<text x="450.0" y="234.0" font-size="4.5" fill="#8eec8a" font-family="Liberation Mono" font-weight="bold">R301</text>
<text x="466.0" y="234.0" font-size="4.5" fill="#8eec8a" font-family="Liberation Mono" font-weight="bold">R302</text>
<rect x="484.2" y="184.5" width="14.6" height="10.2" fill="none" stroke="#8eec8a" stroke-width="1.5"/>
<rect x="484.2" y="196.1" width="14.6" height="10.2" fill="none" stroke="#8eec8a" stroke-width="1.5"/>
<rect x="484.2" y="208.5" width="14.6" height="10.2" fill="none" stroke="#8eec8a" stroke-width="1.5"/>
<rect x="484.2" y="220.9" width="14.6" height="10.2" fill="none" stroke="#8eec8a" stroke-width="1.5"/>
<rect x="484.2" y="232.5" width="14.6" height="10.2" fill="none" stroke="#8eec8a" stroke-width="1.5"/>
<rect x="484.2" y="244.9" width="14.6" height="10.2" fill="none" stroke="#8eec8a" stroke-width="1.5"/>
<text x="499.0" y="192.0" font-size="4.5" fill="#8eec8a" font-family="Liberation Mono" font-weight="bold">R201</text>
<text x="499.0" y="204.0" font-size="4.5" fill="#8eec8a" font-family="Liberation Mono" font-weight="bold">C201</text>
<text x="499.0" y="216.0" font-size="4.5" fill="#8eec8a" font-family="Liberation Mono" font-weight="bold">R206</text>
<text x="499.0" y="229.0" font-size="4.5" fill="#8eec8a" font-family="Liberation Mono" font-weight="bold">R205</text>
<text x="499.0" y="241.0" font-size="4.5" fill="#8eec8a" font-family="Liberation Mono" font-weight="bold">C203</text>
<text x="499.0" y="253.0" font-size="4.5" fill="#8eec8a" font-family="Liberation Mono" font-weight="bold">R204</text>
<rect x="438.4" y="248.5" width="45.1" height="9.5" fill="none" stroke="#8eec8a" stroke-width="1.5"/>
<text x="462.0" y="263.0" font-size="4.5" fill="#8eec8a" font-family="Liberation Mono" font-weight="bold">R201</text>
<rect x="354.7" y="266.1" width="89.6" height="20.4" fill="none" stroke="#8eec8a" stroke-width="1.5"/>
<polyline points="405.7,266.1 405.7,286.5" fill="none" stroke="#8eec8a" stroke-width="1.5" stroke-linejoin="round" stroke-linecap="round"/>
<text x="363.0" y="292.0" font-size="4" fill="#8eec8a" font-family="Liberation Mono" font-weight="bold">U3</text>
<text x="379" y="296.5" font-size="9" fill="#8eec8a" font-family="Liberation Sans">TC</text>
<rect x="403.5" y="287.7" width="31.7" height="58.9" fill="none" stroke="#8eec8a" stroke-width="1.5"/>
<text x="404.0" y="352.0" font-size="4.5" fill="#8eec8a" font-family="Liberation Mono" font-weight="bold">U301</text>
<rect x="440.9" y="290.0" width="12.4" height="7.9" fill="none" stroke="#8eec8a" stroke-width="1.5"/>
<rect x="438.6" y="301.3" width="10.2" height="15.8" fill="none" stroke="#8eec8a" stroke-width="1.5"/>
<rect x="452.2" y="301.3" width="15.8" height="9.0" fill="none" stroke="#8eec8a" stroke-width="1.5"/>
<text x="469.0" y="306.0" font-size="4.5" fill="#8eec8a" font-family="Liberation Mono" font-weight="bold">R301</text>
<rect x="452.2" y="312.6" width="15.8" height="10.2" fill="none" stroke="#8eec8a" stroke-width="1.5"/>
<text x="452.0" y="327.0" font-size="4.5" fill="#8eec8a" font-family="Liberation Mono" font-weight="bold">R304</text>
<rect x="438.6" y="329.6" width="10.2" height="14.7" fill="none" stroke="#8eec8a" stroke-width="1.5"/>
<text x="437.0" y="350.0" font-size="4.5" fill="#8eec8a" font-family="Liberation Mono" font-weight="bold">R303</text>
<rect x="452.2" y="329.6" width="14.8" height="10.2" fill="none" stroke="#8eec8a" stroke-width="1.5"/>
<text x="455.0" y="344.0" font-size="4.5" fill="#8eec8a" font-family="Liberation Mono" font-weight="bold">R305</text>
<circle cx="496.4" cy="334.8" r="5.0" fill="none" stroke="#8eec8a" stroke-width="1.5"/>
<text x="490.0" y="349.0" font-size="4.5" fill="#8eec8a" font-family="Liberation Mono" font-weight="bold">TP303</text>
<circle cx="368.3" cy="329.6" r="5.0" fill="none" stroke="#8eec8a" stroke-width="1.5"/>
<text x="362.0" y="323.0" font-size="4.5" fill="#8eec8a" font-family="Liberation Mono" font-weight="bold">TP104</text>
<text x="358" y="346.8" font-size="9" fill="#8eec8a" font-family="Liberation Sans">GND</text>
<rect x="524.0" y="145.5" width="39.0" height="32.5" fill="none" stroke="#8eec8a" stroke-width="1.5"/>
<text x="537.0" y="143.0" font-size="4.5" fill="#8eec8a" font-family="Liberation Mono" font-weight="bold">U201</text>
<text x="611" y="156" font-size="9" fill="#8eec8a" font-family="Liberation Sans">GND</text>
<circle cx="620.1" cy="162.4" r="5.0" fill="none" stroke="#8eec8a" stroke-width="1.5"/>
<text x="614.0" y="174.0" font-size="4.5" fill="#8eec8a" font-family="Liberation Mono" font-weight="bold">TP201</text>
<rect x="493.5" y="146.5" width="12.5" height="27.3" fill="none" stroke="#8eec8a" stroke-width="1.5"/>
<text x="499.0" y="145.0" font-size="4.5" fill="#8eec8a" font-family="Liberation Mono" font-weight="bold">Q101</text>
<rect x="527.7" y="203.2" width="13.6" height="11.3" fill="none" stroke="#8eec8a" stroke-width="1.5"/>
<rect x="544.7" y="203.2" width="13.6" height="11.3" fill="none" stroke="#8eec8a" stroke-width="1.5"/>
<rect x="536.7" y="216.8" width="13.6" height="9.1" fill="none" stroke="#8eec8a" stroke-width="1.5"/>
<text x="551.0" y="225.0" font-size="4.5" fill="#8eec8a" font-family="Liberation Mono" font-weight="bold">R201</text>
<rect x="514.0" y="232.7" width="10.3" height="19.3" fill="none" stroke="#8eec8a" stroke-width="1.5"/>
<rect x="526.5" y="232.7" width="10.2" height="19.3" fill="none" stroke="#8eec8a" stroke-width="1.5"/>
<rect x="541.3" y="229.3" width="12.4" height="24.9" fill="none" stroke="#8eec8a" stroke-width="1.5"/>
<rect x="558.3" y="230.4" width="9.0" height="14.7" fill="none" stroke="#8eec8a" stroke-width="1.5"/>
<text x="568.0" y="240.0" font-size="4.5" fill="#8eec8a" font-family="Liberation Mono" font-weight="bold">C201</text>
<rect x="615.7" y="222.3" width="39.9" height="167.7" fill="none" stroke="#8eec8a" stroke-width="1.5"/>
<text x="626.0" y="219.0" font-size="4.5" fill="#8eec8a" font-family="Liberation Mono" font-weight="bold">J401</text>
<rect x="671.1" y="141.3" width="97.5" height="39.9" fill="none" stroke="#8eec8a" stroke-width="1.5"/>
<text x="672.0" y="139.0" font-size="4.5" fill="#8eec8a" font-family="Liberation Mono" font-weight="bold">J402</text>
<circle cx="675.7" cy="194.1" r="5.0" fill="none" stroke="#8eec8a" stroke-width="1.5"/>
<text x="670.0" y="205.0" font-size="4.5" fill="#8eec8a" font-family="Liberation Mono" font-weight="bold">TP401</text>
<rect x="691.5" y="189.6" width="14.8" height="9.1" fill="none" stroke="#8eec8a" stroke-width="1.5"/>
<text x="691.0" y="205.0" font-size="4.5" fill="#8eec8a" font-family="Liberation Mono" font-weight="bold">R402</text>
<rect x="715.3" y="189.6" width="15.4" height="9.1" fill="none" stroke="#8eec8a" stroke-width="1.5"/>
<text x="718.0" y="205.0" font-size="4.5" fill="#8eec8a" font-family="Liberation Mono" font-weight="bold">L401</text>
<circle cx="756.1" cy="194.8" r="5.0" fill="none" stroke="#8eec8a" stroke-width="1.5"/>
<text x="750.0" y="188.0" font-size="4.5" fill="#8eec8a" font-family="Liberation Mono" font-weight="bold">TP402</text>
<rect x="750.5" y="206.6" width="10.2" height="14.7" fill="none" stroke="#8eec8a" stroke-width="1.5"/>
<rect x="767.9" y="205.5" width="31.7" height="17.0" fill="none" stroke="#8eec8a" stroke-width="1.5"/>
<polyline points="799.6,208.0 802.0,208.0 802.0,220.0 799.6,220.0" fill="none" stroke="#8eec8a" stroke-width="1.5" stroke-linejoin="round" stroke-linecap="round"/>
<text x="798.0" y="228.0" font-size="4.5" fill="#8eec8a" font-family="Liberation Mono" font-weight="bold">J403</text>
<circle cx="723.3" cy="216.8" r="10.2" fill="none" stroke="#8eec8a" stroke-width="1.5"/>
<text x="716.0" y="236.0" font-size="4.5" fill="#8eec8a" font-family="Liberation Mono" font-weight="bold">D402</text>
<rect x="735.7" y="224.7" width="45.4" height="10.2" fill="none" stroke="#8eec8a" stroke-width="1.5"/>
<text x="752.0" y="241.0" font-size="4.5" fill="#8eec8a" font-family="Liberation Mono" font-weight="bold">T401</text>
<rect x="786.7" y="226.5" width="9.1" height="15.2" fill="none" stroke="#8eec8a" stroke-width="1.5"/>
<text x="786.0" y="247.0" font-size="4.5" fill="#8eec8a" font-family="Liberation Mono" font-weight="bold">D404</text>
<rect x="676.8" y="252.0" width="14.7" height="10.0" fill="none" stroke="#8eec8a" stroke-width="1.5"/>
<rect x="700.6" y="252.0" width="14.7" height="10.0" fill="none" stroke="#8eec8a" stroke-width="1.5"/>
<rect x="724.4" y="252.0" width="14.7" height="10.0" fill="none" stroke="#8eec8a" stroke-width="1.5"/>
<rect x="685.9" y="233.8" width="11.3" height="15.9" fill="none" stroke="#8eec8a" stroke-width="1.5"/>
<rect x="706.3" y="234.8" width="10.2" height="14.9" fill="none" stroke="#8eec8a" stroke-width="1.5"/>
<text x="687.0" y="232.0" font-size="4.5" fill="#8eec8a" font-family="Liberation Mono" font-weight="bold">Q401</text>
<text x="707.0" y="232.0" font-size="4.5" fill="#8eec8a" font-family="Liberation Mono" font-weight="bold">Q402</text>
<rect x="674.5" y="275.2" width="10.2" height="13.6" fill="none" stroke="#8eec8a" stroke-width="1.5"/>
<text x="673.5" y="273.5" font-size="4.5" fill="#8eec8a" font-family="Liberation Mono" font-weight="bold">R400</text>
<rect x="685.9" y="275.2" width="10.2" height="13.6" fill="none" stroke="#8eec8a" stroke-width="1.5"/>
<text x="684.9" y="273.5" font-size="4.5" fill="#8eec8a" font-family="Liberation Mono" font-weight="bold">R401</text>
<rect x="698.3" y="275.2" width="10.2" height="13.6" fill="none" stroke="#8eec8a" stroke-width="1.5"/>
<text x="697.3" y="273.5" font-size="4.5" fill="#8eec8a" font-family="Liberation Mono" font-weight="bold">R402</text>
<rect x="710.8" y="275.2" width="10.2" height="13.6" fill="none" stroke="#8eec8a" stroke-width="1.5"/>
<text x="709.8" y="273.5" font-size="4.5" fill="#8eec8a" font-family="Liberation Mono" font-weight="bold">R403</text>
<rect x="722.1" y="275.2" width="10.2" height="13.6" fill="none" stroke="#8eec8a" stroke-width="1.5"/>
<text x="721.1" y="273.5" font-size="4.5" fill="#8eec8a" font-family="Liberation Mono" font-weight="bold">R404</text>
<rect x="734.6" y="275.2" width="10.2" height="13.6" fill="none" stroke="#8eec8a" stroke-width="1.5"/>
<text x="733.6" y="273.5" font-size="4.5" fill="#8eec8a" font-family="Liberation Mono" font-weight="bold">R405</text>
<rect x="699.5" y="296.7" width="15.8" height="10.2" fill="none" stroke="#8eec8a" stroke-width="1.5"/>
<text x="700.0" y="295.0" font-size="4.5" fill="#8eec8a" font-family="Liberation Mono" font-weight="bold">J402</text>
<rect x="771.5" y="257.0" width="32.2" height="41.5" fill="none" stroke="#8eec8a" stroke-width="1.5"/>
<polyline points="803.7,266.0 807.0,266.0 807.0,288.0 803.7,288.0" fill="none" stroke="#8eec8a" stroke-width="1.5" stroke-linejoin="round" stroke-linecap="round"/>
<text x="760.0" y="286.0" font-size="4.5" fill="#8eec8a" font-family="Liberation Mono" font-weight="bold">J501</text>
<rect x="771.5" y="309.2" width="32.2" height="65.7" fill="none" stroke="#8eec8a" stroke-width="1.5"/>
<polyline points="803.7,333.0 807.0,333.0 807.0,349.0 803.7,349.0" fill="none" stroke="#8eec8a" stroke-width="1.5" stroke-linejoin="round" stroke-linecap="round"/>
<text x="760.0" y="331.0" font-size="4.5" fill="#8eec8a" font-family="Liberation Mono" font-weight="bold">J502</text>
<rect x="597.9" y="287.7" width="13.6" height="10.2" fill="none" stroke="#8eec8a" stroke-width="1.5"/>
<rect x="658.0" y="288.8" width="10.2" height="18.1" fill="none" stroke="#8eec8a" stroke-width="1.5"/>
<rect x="577.5" y="342.1" width="32.9" height="15.8" fill="none" stroke="#8eec8a" stroke-width="1.5"/>
<polyline points="577.5,345.0 574.0,345.0 574.0,355.0 577.5,355.0" fill="none" stroke="#8eec8a" stroke-width="1.5" stroke-linejoin="round" stroke-linecap="round"/>
<text x="577.0" y="361.0" font-size="4.5" fill="#8eec8a" font-family="Liberation Mono" font-weight="bold">J404</text>
<rect x="595.7" y="360.2" width="14.7" height="10.2" fill="none" stroke="#8eec8a" stroke-width="1.5"/>
<text x="597.0" y="376.0" font-size="4.5" fill="#8eec8a" font-family="Liberation Mono" font-weight="bold">D406</text>
<rect x="492.1" y="360.5" width="57.3" height="42.8" fill="none" stroke="#8eec8a" stroke-width="1.5"/>
<text x="513.0" y="358.0" font-size="4.5" fill="#8eec8a" font-family="Liberation Mono" font-weight="bold">U502</text>
<circle cx="563.9" cy="381.7" r="10.2" fill="none" stroke="#8eec8a" stroke-width="1.5"/>
<text x="558.0" y="369.0" font-size="4.5" fill="#8eec8a" font-family="Liberation Mono" font-weight="bold">C504</text>
<rect x="423.9" y="371.5" width="31.7" height="13.6" fill="none" stroke="#8eec8a" stroke-width="1.5"/>
<text x="428.0" y="369.0" font-size="4.5" fill="#8eec8a" font-family="Liberation Mono" font-weight="bold">R501</text>
<rect x="425.0" y="390.8" width="27.2" height="12.5" fill="none" stroke="#8eec8a" stroke-width="1.5"/>
<text x="428.0" y="410.0" font-size="4.5" fill="#8eec8a" font-family="Liberation Mono" font-weight="bold">C501</text>
<circle cx="471.5" cy="396.5" r="10.0" fill="none" stroke="#8eec8a" stroke-width="1.5"/>
<text x="466.0" y="385.0" font-size="4.5" fill="#8eec8a" font-family="Liberation Mono" font-weight="bold">C503</text>
<rect x="361.5" y="440.1" width="29.5" height="42.0" fill="none" stroke="#8eec8a" stroke-width="1.5"/>
<polyline points="361.5,451.0 358.0,451.0 358.0,471.0 361.5,471.0" fill="none" stroke="#8eec8a" stroke-width="1.5" stroke-linejoin="round" stroke-linecap="round"/>
<text x="362.0" y="488.0" font-size="4.5" fill="#8eec8a" font-family="Liberation Mono" font-weight="bold">J504</text>
<rect x="398.5" y="440.1" width="18.6" height="11.4" fill="none" stroke="#8eec8a" stroke-width="1.5"/>
<rect x="398.5" y="456.0" width="18.6" height="11.4" fill="none" stroke="#8eec8a" stroke-width="1.5"/>
<rect x="398.5" y="471.9" width="18.6" height="11.4" fill="none" stroke="#8eec8a" stroke-width="1.5"/>
<text x="399.0" y="438.0" font-size="4.5" fill="#8eec8a" font-family="Liberation Mono" font-weight="bold">C504</text>
<text x="399.0" y="454.0" font-size="4.5" fill="#8eec8a" font-family="Liberation Mono" font-weight="bold">C505</text>
<text x="399.0" y="470.0" font-size="4.5" fill="#8eec8a" font-family="Liberation Mono" font-weight="bold">C506</text>
<rect x="423.9" y="424.3" width="31.7" height="13.6" fill="none" stroke="#8eec8a" stroke-width="1.5"/>
<text x="428.0" y="422.0" font-size="4.5" fill="#8eec8a" font-family="Liberation Mono" font-weight="bold">R502</text>
<rect x="426.8" y="443.5" width="26.5" height="12.5" fill="none" stroke="#8eec8a" stroke-width="1.5"/>
<text x="428.0" y="461.0" font-size="4.5" fill="#8eec8a" font-family="Liberation Mono" font-weight="bold">D502</text>
<rect x="423.9" y="476.4" width="31.7" height="13.6" fill="none" stroke="#8eec8a" stroke-width="1.5"/>
<text x="428.0" y="474.0" font-size="4.5" fill="#8eec8a" font-family="Liberation Mono" font-weight="bold">R503</text>
<rect x="425.0" y="494.5" width="27.9" height="13.6" fill="none" stroke="#8eec8a" stroke-width="1.5"/>
<text x="428.0" y="513.0" font-size="4.5" fill="#8eec8a" font-family="Liberation Mono" font-weight="bold">D503</text>
<circle cx="471.5" cy="453.7" r="10.2" fill="none" stroke="#8eec8a" stroke-width="1.5"/>
<text x="466.0" y="442.0" font-size="4.5" fill="#8eec8a" font-family="Liberation Mono" font-weight="bold">C502</text>
<circle cx="471.5" cy="493.4" r="10.2" fill="none" stroke="#8eec8a" stroke-width="1.5"/>
<text x="466.0" y="482.0" font-size="4.5" fill="#8eec8a" font-family="Liberation Mono" font-weight="bold">C503</text>
<circle cx="502.0" cy="477.5" r="10.0" fill="none" stroke="#8eec8a" stroke-width="1.5"/>
<rect x="492.2" y="420.4" width="57.8" height="43.1" fill="none" stroke="#8eec8a" stroke-width="1.5"/>
<text x="513.0" y="418.0" font-size="4.5" fill="#8eec8a" font-family="Liberation Mono" font-weight="bold">U504</text>
<circle cx="587.7" cy="505.9" r="5.0" fill="none" stroke="#8eec8a" stroke-width="1.5"/>
<text x="582.0" y="498.0" font-size="4.5" fill="#8eec8a" font-family="Liberation Mono" font-weight="bold">TP502</text>
<text x="579" y="522" font-size="9" fill="#8eec8a" font-family="Liberation Sans">GND</text>
<rect x="600.2" y="404.9" width="31.7" height="33.0" fill="none" stroke="#8eec8a" stroke-width="1.5"/>
<polyline points="600.2,414.0 597.0,414.0 597.0,429.0 600.2,429.0" fill="none" stroke="#8eec8a" stroke-width="1.5" stroke-linejoin="round" stroke-linecap="round"/>
<text x="590.0" y="443.0" font-size="4.5" fill="#8eec8a" font-family="Liberation Mono" font-weight="bold">J702</text>
<rect x="608.1" y="444.7" width="14.8" height="10.2" fill="none" stroke="#8eec8a" stroke-width="1.5"/>
<text x="624.0" y="453.0" font-size="4.5" fill="#8eec8a" font-family="Liberation Mono" font-weight="bold">D701</text>
<rect x="595.2" y="461.7" width="9.5" height="14.7" fill="none" stroke="#8eec8a" stroke-width="1.5"/>
<rect x="606.5" y="461.7" width="9.6" height="14.7" fill="none" stroke="#8eec8a" stroke-width="1.5"/>
<rect x="618.3" y="461.7" width="9.5" height="14.7" fill="none" stroke="#8eec8a" stroke-width="1.5"/>
<rect x="630.1" y="461.7" width="10.4" height="14.7" fill="none" stroke="#8eec8a" stroke-width="1.5"/>
<text x="595.0" y="482.0" font-size="4.5" fill="#8eec8a" font-family="Liberation Mono" font-weight="bold">R701R707R702R705</text>
<rect x="660.7" y="487.5" width="13.0" height="27.2" fill="none" stroke="#8eec8a" stroke-width="1.5"/>
<text x="662.0" y="485.0" font-size="4.5" fill="#8eec8a" font-family="Liberation Mono" font-weight="bold">D702</text>
<rect x="772.1" y="437.0" width="31.1" height="49.2" fill="none" stroke="#8eec8a" stroke-width="1.5"/>
<polyline points="803.2,452.0 806.5,452.0 806.5,470.0 803.2,470.0" fill="none" stroke="#8eec8a" stroke-width="1.5" stroke-linejoin="round" stroke-linecap="round"/>
<text x="771.0" y="492.0" font-size="4.5" fill="#8eec8a" font-family="Liberation Mono" font-weight="bold">J701</text>
<polyline points="686.6,407.0 712.5,407.0" fill="none" stroke="#8eec8a" stroke-width="1.5" stroke-linejoin="round" stroke-linecap="round"/>
<polyline points="686.6,467.0 712.5,467.0" fill="none" stroke="#8eec8a" stroke-width="1.5" stroke-linejoin="round" stroke-linecap="round"/>
<rect x="695.7" y="396.8" width="15.5" height="9.1" fill="none" stroke="#8eec8a" stroke-width="1.5"/>
<text x="712.0" y="401.0" font-size="4.5" fill="#8eec8a" font-family="Liberation Mono" font-weight="bold">C704</text>
<text x="685.0" y="401.0" font-size="4.5" fill="#8eec8a" font-family="Liberation Mono" font-weight="bold">U701</text>
<rect x="728.0" y="408.5" width="14.3" height="10.3" fill="none" stroke="#8eec8a" stroke-width="1.5"/>
<text x="744.0" y="416.5" font-size="4.5" fill="#8eec8a" font-family="Liberation Mono" font-weight="bold">C701</text>
<rect x="728.0" y="420.2" width="14.3" height="10.3" fill="none" stroke="#8eec8a" stroke-width="1.5"/>
<text x="744.0" y="428.2" font-size="4.5" fill="#8eec8a" font-family="Liberation Mono" font-weight="bold">C702</text>
<rect x="728.0" y="431.8" width="14.3" height="10.3" fill="none" stroke="#8eec8a" stroke-width="1.5"/>
<text x="744.0" y="439.8" font-size="4.5" fill="#8eec8a" font-family="Liberation Mono" font-weight="bold">C703</text>
<rect x="728.0" y="444.8" width="14.3" height="10.3" fill="none" stroke="#8eec8a" stroke-width="1.5"/>
<text x="744.0" y="452.8" font-size="4.5" fill="#8eec8a" font-family="Liberation Mono" font-weight="bold">C704</text>
<rect x="728.0" y="456.4" width="14.3" height="10.3" fill="none" stroke="#8eec8a" stroke-width="1.5"/>
<text x="744.0" y="464.4" font-size="4.5" fill="#8eec8a" font-family="Liberation Mono" font-weight="bold">C705</text>
<rect x="728.0" y="468.1" width="14.3" height="10.3" fill="none" stroke="#8eec8a" stroke-width="1.5"/>
<text x="744.0" y="476.1" font-size="4.5" fill="#8eec8a" font-family="Liberation Mono" font-weight="bold">C706</text>
<rect x="691.8" y="484.9" width="14.3" height="9.1" fill="none" stroke="#8eec8a" stroke-width="1.5"/>
<text x="707.0" y="492.0" font-size="4.5" fill="#8eec8a" font-family="Liberation Mono" font-weight="bold">R712</text>
<rect x="691.8" y="496.6" width="14.3" height="10.4" fill="none" stroke="#8eec8a" stroke-width="1.5"/>
<text x="707.0" y="504.0" font-size="4.5" fill="#8eec8a" font-family="Liberation Mono" font-weight="bold">R713</text>
<rect x="678.9" y="484.9" width="9.0" height="19.5" fill="none" stroke="#8eec8a" stroke-width="1.5"/>
<rect x="659.4" y="435.7" width="15.6" height="10.3" fill="none" stroke="#8eec8a" stroke-width="1.5"/>
<rect x="659.4" y="448.7" width="15.6" height="10.3" fill="none" stroke="#8eec8a" stroke-width="1.5"/>
<text x="645.0" y="443.0" font-size="4.5" fill="#8eec8a" font-family="Liberation Mono" font-weight="bold">R706</text>
<text x="645.0" y="456.0" font-size="4.5" fill="#8eec8a" font-family="Liberation Mono" font-weight="bold">R707</text>
<rect x="660.7" y="487.5" width="13.0" height="27.2" fill="none" stroke="#8eec8a" stroke-width="1.5"/>
<circle cx="399.4" cy="181.7" r="3.8" fill="#f27d70"/>
<circle cx="415.9" cy="181.7" r="3.8" fill="#f27d70"/>
<circle cx="451.1" cy="153.3" r="5.1" fill="#f27d70"/>
<circle cx="464.2" cy="153.3" r="5.1" fill="#f27d70"/>
<circle cx="477.1" cy="153.3" r="5.1" fill="#f27d70"/>
<circle cx="451.1" cy="171.5" r="5.1" fill="#f27d70"/>
<circle cx="464.2" cy="171.5" r="5.1" fill="#f27d70"/>
<rect x="471.6" y="166.0" width="11.0" height="11.0" fill="#f27d70"/>
<circle cx="479.1" cy="253.4" r="4.0" fill="#f27d70"/>
<circle cx="431.8" cy="280.4" r="5.2" fill="#f27d70"/>
<rect x="525.0" y="146.5" width="37.1" height="30.6" fill="#f27d70"/>
<rect x="495.0" y="157.0" width="9.5" height="4.0" fill="#f27d70"/>
<rect x="529.0" y="184.4" width="28.0" height="9.1" fill="#f27d70"/>
<rect x="515.5" y="240.8" width="7.3" height="2.5" fill="#f27d70"/>
<rect x="528.0" y="240.8" width="7.2" height="2.5" fill="#f27d70"/>
<rect x="542.8" y="239.8" width="9.4" height="3.2" fill="#f27d70"/>
<circle cx="635.2" cy="232.5" r="10.3" fill="#f27d70"/>
<circle cx="630.2" cy="258.1" r="3.9" fill="#f27d70"/>
<circle cx="630.2" cy="266.9" r="3.9" fill="#f27d70"/>
<circle cx="630.2" cy="275.6" r="3.9" fill="#f27d70"/>
<circle cx="630.2" cy="284.4" r="3.9" fill="#f27d70"/>
<circle cx="630.2" cy="293.1" r="3.9" fill="#f27d70"/>
<circle cx="630.2" cy="301.9" r="3.9" fill="#f27d70"/>
<circle cx="630.2" cy="310.6" r="3.9" fill="#f27d70"/>
<circle cx="630.2" cy="319.4" r="3.9" fill="#f27d70"/>
<circle cx="630.2" cy="328.1" r="3.9" fill="#f27d70"/>
<circle cx="630.2" cy="336.9" r="3.9" fill="#f27d70"/>
<circle cx="630.2" cy="345.6" r="3.9" fill="#f27d70"/>
<circle cx="630.2" cy="354.4" r="3.9" fill="#f27d70"/>
<rect x="635.4" y="248.7" width="8.5" height="8.5" fill="#f27d70"/>
<circle cx="639.6" cy="261.8" r="3.9" fill="#f27d70"/>
<circle cx="639.6" cy="270.6" r="3.9" fill="#f27d70"/>
<circle cx="639.6" cy="279.5" r="3.9" fill="#f27d70"/>
<circle cx="639.6" cy="288.4" r="3.9" fill="#f27d70"/>
<circle cx="639.6" cy="297.2" r="3.9" fill="#f27d70"/>
<circle cx="639.6" cy="306.1" r="3.9" fill="#f27d70"/>
<circle cx="639.6" cy="315.0" r="3.9" fill="#f27d70"/>
<circle cx="639.6" cy="323.9" r="3.9" fill="#f27d70"/>
<circle cx="639.6" cy="332.7" r="3.9" fill="#f27d70"/>
<circle cx="639.6" cy="341.6" r="3.9" fill="#f27d70"/>
<circle cx="639.6" cy="350.5" r="3.9" fill="#f27d70"/>
<circle cx="639.6" cy="359.3" r="3.9" fill="#f27d70"/>
<circle cx="635.2" cy="379.7" r="10.8" fill="#f27d70"/>
<circle cx="681.3" cy="162.4" r="10.6" fill="#f27d70"/>
<circle cx="758.8" cy="162.4" r="11.2" fill="#f27d70"/>
<rect x="769.2" y="208.3" width="11.0" height="11.0" fill="#f27d70"/>
<circle cx="792.4" cy="214.5" r="5.1" fill="#f27d70"/>
<circle cx="740.7" cy="229.7" r="4.1" fill="#f27d70"/>
<circle cx="775.4" cy="229.7" r="4.1" fill="#f27d70"/>
<rect x="687.5" y="240.0" width="8.2" height="4.0" fill="#f27d70"/>
<rect x="699.5" y="297.8" width="8.0" height="8.0" fill="#f27d70"/>
<circle cx="783.3" cy="274.1" r="4.1" fill="#f27d70"/>
<circle cx="791.9" cy="274.1" r="4.1" fill="#f27d70"/>
<circle cx="783.3" cy="282.0" r="4.1" fill="#f27d70"/>
<circle cx="791.9" cy="282.0" r="4.1" fill="#f27d70"/>
<circle cx="783.3" cy="289.5" r="4.1" fill="#f27d70"/>
<circle cx="791.9" cy="289.5" r="4.1" fill="#f27d70"/>
<rect x="778.8" y="285.0" width="9.0" height="9.0" fill="#f27d70"/>
<circle cx="783.3" cy="318.3" r="4.1" fill="#f27d70"/>
<circle cx="791.9" cy="318.3" r="4.1" fill="#f27d70"/>
<circle cx="783.3" cy="326.2" r="4.1" fill="#f27d70"/>
<circle cx="791.9" cy="326.2" r="4.1" fill="#f27d70"/>
<circle cx="783.3" cy="333.7" r="4.1" fill="#f27d70"/>
<circle cx="791.9" cy="333.7" r="4.1" fill="#f27d70"/>
<circle cx="783.3" cy="341.6" r="4.1" fill="#f27d70"/>
<circle cx="791.9" cy="341.6" r="4.1" fill="#f27d70"/>
<circle cx="783.3" cy="350.0" r="4.1" fill="#f27d70"/>
<circle cx="791.9" cy="350.0" r="4.1" fill="#f27d70"/>
<circle cx="783.3" cy="357.5" r="4.1" fill="#f27d70"/>
<circle cx="791.9" cy="357.5" r="4.1" fill="#f27d70"/>
<circle cx="783.3" cy="365.2" r="4.1" fill="#f27d70"/>
<circle cx="791.9" cy="365.2" r="4.1" fill="#f27d70"/>
<rect x="778.8" y="360.7" width="9.0" height="9.0" fill="#f27d70"/>
<circle cx="587.7" cy="350.0" r="5.1" fill="#f27d70"/>
<rect x="598.5" y="344.5" width="11.0" height="11.0" fill="#f27d70"/>
<rect x="518.6" y="367.0" width="17.0" height="29.5" fill="#f27d70"/>
<rect x="561.0" y="376.0" width="6.0" height="12.0" fill="#f27d70"/>
<rect x="438.0" y="392.0" width="3.0" height="10.0" fill="#f27d70"/>
<rect x="438.0" y="445.0" width="3.0" height="10.0" fill="#f27d70"/>
<rect x="437.5" y="496.0" width="3.0" height="11.0" fill="#f27d70"/>
<rect x="518.6" y="426.5" width="17.0" height="29.5" fill="#f27d70"/>
<rect x="535.6" y="420.9" width="9.1" height="40.8" fill="#f27d70"/>
<rect x="662.2" y="500.0" width="10.0" height="4.0" fill="#f27d70"/>
<circle cx="783.3" cy="444.8" r="4.0" fill="#f27d70"/>
<circle cx="792.3" cy="444.8" r="4.0" fill="#f27d70"/>
<circle cx="783.3" cy="453.3" r="4.0" fill="#f27d70"/>
<circle cx="792.3" cy="453.3" r="4.0" fill="#f27d70"/>
<circle cx="783.3" cy="461.9" r="4.0" fill="#f27d70"/>
<circle cx="792.3" cy="461.9" r="4.0" fill="#f27d70"/>
<circle cx="783.3" cy="470.2" r="4.0" fill="#f27d70"/>
<circle cx="792.3" cy="470.2" r="4.0" fill="#f27d70"/>
<circle cx="783.3" cy="477.9" r="4.0" fill="#f27d70"/>
<circle cx="792.3" cy="477.9" r="4.0" fill="#f27d70"/>
<rect x="778.8" y="473.4" width="9.0" height="9.0" fill="#f27d70"/>
<rect x="729.5" y="458.0" width="5.0" height="8.0" fill="#f27d70"/>
<rect x="736.0" y="458.0" width="5.0" height="8.0" fill="#f27d70"/>
<rect x="530.2" y="185.0" width="4.6" height="8.5" fill="#a468d8"/>
<rect x="535.7" y="185.0" width="4.6" height="8.5" fill="#a468d8"/>
<rect x="541.2" y="185.0" width="4.6" height="8.5" fill="#a468d8"/>
<rect x="546.7" y="185.0" width="4.6" height="8.5" fill="#a468d8"/>
<rect x="552.2" y="185.0" width="4.6" height="8.5" fill="#a468d8"/>
<rect x="344" y="129.3" width="480" height="400.5" fill="none" stroke="#5f5cb0" stroke-width="1.2"/>
<circle cx="399.4" cy="147.0" r="3.2" fill="#8479e2"/>
<circle cx="399.4" cy="181.7" r="3.2" fill="#8479e2"/>
<rect x="412.4" y="143.5" width="7.0" height="7.0" fill="#8479e2"/>
<circle cx="415.9" cy="181.7" r="3.2" fill="#8479e2"/>
<polyline points="399.4,147.0 415.9,147.0" fill="none" stroke="#7a70d6" stroke-width="2.1" stroke-linejoin="round" stroke-linecap="round"/>
<circle cx="451.1" cy="153.3" r="4.5" fill="#8479e2"/>
<circle cx="464.2" cy="153.3" r="4.5" fill="#8479e2"/>
<circle cx="477.1" cy="153.3" r="4.5" fill="#8479e2"/>
<circle cx="451.1" cy="171.5" r="4.5" fill="#8479e2"/>
<circle cx="464.2" cy="171.5" r="4.5" fill="#8479e2"/>
<rect x="472.6" y="167.0" width="9.0" height="9.0" fill="#8479e2"/>
<polyline points="464.2,153.3 464.2,145.0 498.7,145.0 505.0,150.0" fill="none" stroke="#7a70d6" stroke-width="2.1" stroke-linejoin="round" stroke-linecap="round"/>
<polyline points="451.1,153.3 442.0,155.0 439.7,160.0 439.7,186.0 437.0,190.0" fill="none" stroke="#7a70d6" stroke-width="2.1" stroke-linejoin="round" stroke-linecap="round"/>
<polyline points="464.2,171.5 464.2,164.0 486.0,164.0 506.0,180.0" fill="none" stroke="#7a70d6" stroke-width="2.1" stroke-linejoin="round" stroke-linecap="round"/>
<rect x="361.9" y="166.2" width="4.9" height="6.0" fill="#8479e2"/>
<rect x="368.8" y="166.2" width="4.9" height="6.0" fill="#8479e2"/>
<polyline points="355.0,169.0 361.0,169.0" fill="none" stroke="#7a70d6" stroke-width="2.1" stroke-linejoin="round" stroke-linecap="round"/>
<rect x="361.9" y="178.5" width="4.9" height="6.2" fill="#8479e2"/>
<rect x="368.8" y="178.5" width="4.9" height="6.2" fill="#8479e2"/>
<circle cx="364.0" cy="190.0" r="2.3" fill="#8479e2"/>
<circle cx="369.0" cy="191.0" r="2.3" fill="#8479e2"/>
<rect x="379.5" y="179.0" width="3.0" height="3.8" fill="#8479e2"/>
<rect x="379.5" y="184.8" width="3.0" height="3.8" fill="#8479e2"/>
<rect x="387.5" y="179.0" width="3.0" height="3.8" fill="#8479e2"/>
<rect x="387.5" y="184.8" width="3.0" height="3.8" fill="#8479e2"/>
<rect x="377.8" y="191.1" width="4.8" height="7.2" fill="#8479e2"/>
<rect x="384.6" y="191.1" width="4.9" height="7.2" fill="#8479e2"/>
<rect x="377.8" y="210.4" width="4.8" height="6.1" fill="#8479e2"/>
<rect x="384.6" y="210.4" width="4.9" height="6.1" fill="#8479e2"/>
<polyline points="384.0,200.0 388.0,206.0" fill="none" stroke="#7a70d6" stroke-width="2.1" stroke-linejoin="round" stroke-linecap="round"/>
<circle cx="367.7" cy="214.5" r="3.8" fill="#8479e2"/>
<circle cx="404.6" cy="210.0" r="3.8" fill="#8479e2"/>
<polyline points="388.0,170.0 393.0,175.0 393.0,186.0 400.0,181.7" fill="none" stroke="#7a70d6" stroke-width="2.1" stroke-linejoin="round" stroke-linecap="round"/>
<polyline points="374.0,175.0 366.0,190.0 360.0,200.0 360.4,220.0 374.0,231.5 412.5,231.5 412.5,252.0 426.0,265.0 436.0,265.0 446.6,270.0" fill="none" stroke="#7a70d6" stroke-width="2.1" stroke-linejoin="round" stroke-linecap="round"/>
<polyline points="440.0,290.0 452.0,292.0 470.4,292.4 470.4,320.0 432.0,320.0" fill="none" stroke="#7a70d6" stroke-width="2.1" stroke-linejoin="round" stroke-linecap="round"/>
<polyline points="528.0,284.4 603.5,284.4 610.0,292.0" fill="none" stroke="#7a70d6" stroke-width="2" stroke-linejoin="round" stroke-linecap="round"/>
<circle cx="528.0" cy="284.4" r="1.8" fill="#8479e2"/>
<polyline points="446.6,270.0 540.7,331.9 630.8,331.9" fill="none" stroke="#7a70d6" stroke-width="2.1" stroke-linejoin="round" stroke-linecap="round"/>
<circle cx="495.5" cy="274.6" r="3.8" fill="#8479e2"/>
<polyline points="495.5,274.6 495.5,258.0" fill="none" stroke="#7a70d6" stroke-width="2.1" stroke-linejoin="round" stroke-linecap="round"/>
<polyline points="404.6,210.0 404.6,200.0 412.0,192.0 434.0,188.0" fill="none" stroke="#7a70d6" stroke-width="2.1" stroke-linejoin="round" stroke-linecap="round"/>
<polyline points="412.5,231.5 415.0,225.0 430.0,212.0" fill="none" stroke="#7a70d6" stroke-width="2.1" stroke-linejoin="round" stroke-linecap="round"/>
<rect x="430.0" y="186.5" width="11.0" height="6.2" fill="#8479e2"/>
<rect x="429.5" y="197.9" width="5.5" height="6.6" fill="#8479e2"/>
<rect x="436.5" y="197.9" width="5.5" height="6.6" fill="#8479e2"/>
<rect x="429.5" y="210.3" width="5.5" height="6.6" fill="#8479e2"/>
<rect x="436.5" y="210.3" width="5.5" height="6.6" fill="#8479e2"/>
<rect x="429.5" y="221.9" width="5.5" height="6.6" fill="#8479e2"/>
<rect x="436.5" y="221.9" width="5.5" height="6.6" fill="#8479e2"/>
<rect x="430.0" y="234.5" width="11.0" height="6.2" fill="#8479e2"/>
<polyline points="424.0,214.0 430.0,214.0" fill="none" stroke="#7a70d6" stroke-width="2.1" stroke-linejoin="round" stroke-linecap="round"/>
<polyline points="424.0,238.0 430.0,238.0" fill="none" stroke="#7a70d6" stroke-width="2.1" stroke-linejoin="round" stroke-linecap="round"/>
<rect x="451.5" y="203.4" width="8.7" height="6.8" fill="#8479e2"/>
<rect x="466.8" y="203.4" width="8.7" height="6.8" fill="#8479e2"/>
<rect x="451.5" y="212.1" width="8.7" height="6.8" fill="#8479e2"/>
<rect x="466.8" y="212.1" width="8.7" height="6.8" fill="#8479e2"/>
<rect x="451.5" y="220.3" width="8.7" height="6.8" fill="#8479e2"/>
<rect x="466.8" y="220.3" width="8.7" height="6.8" fill="#8479e2"/>
<rect x="452.0" y="200.0" width="8.0" height="2.5" fill="#8479e2"/>
<rect x="467.0" y="200.0" width="8.0" height="2.5" fill="#8479e2"/>
<polyline points="462.4,186.6 462.4,226.0" fill="none" stroke="#7a70d6" stroke-width="1.6" stroke-linejoin="round" stroke-linecap="round"/>
<polyline points="449.0,175.0 460.0,186.0 462.4,192.0" fill="none" stroke="#7a70d6" stroke-width="2.1" stroke-linejoin="round" stroke-linecap="round"/>
<polyline points="438.7,175.0 438.7,184.0" fill="none" stroke="#7a70d6" stroke-width="2.1" stroke-linejoin="round" stroke-linecap="round"/>
<polyline points="410.0,230.3 412.9,211.4 417.3,201.2 433.3,201.2" fill="none" stroke="#7a70d6" stroke-width="2.1" stroke-linejoin="round" stroke-linecap="round"/>
<polyline points="412.9,211.4 412.9,252.0 418.7,259.4" fill="none" stroke="#7a70d6" stroke-width="2.1" stroke-linejoin="round" stroke-linecap="round"/>
<polyline points="443.5,214.0 451.5,215.5" fill="none" stroke="#7a70d6" stroke-width="2.1" stroke-linejoin="round" stroke-linecap="round"/>
<polyline points="443.5,226.0 451.5,223.7" fill="none" stroke="#7a70d6" stroke-width="2.1" stroke-linejoin="round" stroke-linecap="round"/>
<polyline points="475.5,215.5 486.0,213.5" fill="none" stroke="#7a70d6" stroke-width="2.1" stroke-linejoin="round" stroke-linecap="round"/>
<polyline points="475.5,206.8 484.0,190.0" fill="none" stroke="#7a70d6" stroke-width="2.1" stroke-linejoin="round" stroke-linecap="round"/>
<polyline points="475.5,223.7 484.0,225.5" fill="none" stroke="#7a70d6" stroke-width="2.1" stroke-linejoin="round" stroke-linecap="round"/>
<polyline points="455.0,227.0 455.0,238.0" fill="none" stroke="#7a70d6" stroke-width="2.1" stroke-linejoin="round" stroke-linecap="round"/>
<polyline points="470.0,227.0 471.0,238.0" fill="none" stroke="#7a70d6" stroke-width="2.1" stroke-linejoin="round" stroke-linecap="round"/>
<polyline points="451.0,253.0 455.0,245.0" fill="none" stroke="#7a70d6" stroke-width="2.1" stroke-linejoin="round" stroke-linecap="round"/>
<rect x="450.1" y="236.9" width="4.0" height="7.9" fill="#8479e2"/>
<rect x="456.1" y="236.9" width="4.1" height="7.9" fill="#8479e2"/>
<rect x="466.1" y="236.9" width="4.4" height="7.9" fill="#8479e2"/>
<rect x="472.5" y="236.9" width="4.4" height="7.9" fill="#8479e2"/>
<rect x="486.0" y="186.3" width="5.0" height="6.6" fill="#8479e2"/>
<rect x="492.5" y="186.3" width="5.0" height="6.6" fill="#8479e2"/>
<rect x="486.0" y="197.9" width="5.0" height="6.6" fill="#8479e2"/>
<rect x="492.5" y="197.9" width="5.0" height="6.6" fill="#8479e2"/>
<rect x="486.0" y="210.3" width="5.0" height="6.6" fill="#8479e2"/>
<rect x="492.5" y="210.3" width="5.0" height="6.6" fill="#8479e2"/>
<rect x="486.0" y="222.7" width="5.0" height="6.6" fill="#8479e2"/>
<rect x="492.5" y="222.7" width="5.0" height="6.6" fill="#8479e2"/>
<rect x="486.0" y="234.3" width="5.0" height="6.6" fill="#8479e2"/>
<rect x="492.5" y="234.3" width="5.0" height="6.6" fill="#8479e2"/>
<rect x="486.0" y="246.7" width="5.0" height="6.6" fill="#8479e2"/>
<rect x="492.5" y="246.7" width="5.0" height="6.6" fill="#8479e2"/>
<polyline points="498.0,190.0 505.0,185.0 513.0,186.0 514.0,204.3 521.0,210.0 527.0,210.0" fill="none" stroke="#7a70d6" stroke-width="2.1" stroke-linejoin="round" stroke-linecap="round"/>
<polyline points="498.0,226.0 510.7,208.9" fill="none" stroke="#7a70d6" stroke-width="2.1" stroke-linejoin="round" stroke-linecap="round"/>
<polyline points="498.0,238.0 518.6,220.2 518.6,236.0 519.7,247.4" fill="none" stroke="#7a70d6" stroke-width="2.1" stroke-linejoin="round" stroke-linecap="round"/>
<polyline points="491.0,255.0 491.0,270.0" fill="none" stroke="#7a70d6" stroke-width="2.1" stroke-linejoin="round" stroke-linecap="round"/>
<polyline points="496.0,255.0 496.0,270.0" fill="none" stroke="#7a70d6" stroke-width="2.1" stroke-linejoin="round" stroke-linecap="round"/>
<rect x="440.2" y="250.2" width="6.5" height="6.5" fill="#8479e2"/>
<circle cx="479.1" cy="253.4" r="3.4" fill="#8479e2"/>
<circle cx="367.7" cy="257.6" r="2.3" fill="#8479e2"/>
<polyline points="485.0,270.0 492.0,270.0" fill="none" stroke="#7a70d6" stroke-width="2.1" stroke-linejoin="round" stroke-linecap="round"/>
<rect x="408.0" y="275.3" width="10.0" height="10.0" fill="#8479e2"/>
<circle cx="431.8" cy="280.4" r="4.6" fill="#8479e2"/>
<polyline points="413.0,285.0 413.0,288.0" fill="none" stroke="#7a70d6" stroke-width="2.1" stroke-linejoin="round" stroke-linecap="round"/>
<polyline points="431.8,285.0 431.8,294.5" fill="none" stroke="#7a70d6" stroke-width="2.1" stroke-linejoin="round" stroke-linecap="round"/>
<rect x="405.0" y="291.5" width="6.0" height="6.0" fill="#8479e2"/>
<circle cx="431.8" cy="294.5" r="3.0" fill="#8479e2"/>
<circle cx="408.0" cy="302.4" r="3.0" fill="#8479e2"/>
<circle cx="431.8" cy="302.4" r="3.0" fill="#8479e2"/>
<circle cx="408.0" cy="310.4" r="3.0" fill="#8479e2"/>
<circle cx="431.8" cy="310.4" r="3.0" fill="#8479e2"/>
<circle cx="408.0" cy="318.3" r="3.0" fill="#8479e2"/>
<circle cx="431.8" cy="318.3" r="3.0" fill="#8479e2"/>
<circle cx="408.0" cy="326.2" r="3.0" fill="#8479e2"/>
<circle cx="431.8" cy="326.2" r="3.0" fill="#8479e2"/>
<circle cx="408.0" cy="334.1" r="3.0" fill="#8479e2"/>
<circle cx="431.8" cy="334.1" r="3.0" fill="#8479e2"/>
<circle cx="408.0" cy="342.1" r="3.0" fill="#8479e2"/>
<circle cx="431.8" cy="342.1" r="3.0" fill="#8479e2"/>
<rect x="442.4" y="291.5" width="3.7" height="4.9" fill="#8479e2"/>
<rect x="448.1" y="291.5" width="3.7" height="4.9" fill="#8479e2"/>
<rect x="440.1" y="302.8" width="7.2" height="5.4" fill="#8479e2"/>
<rect x="440.1" y="310.2" width="7.2" height="5.4" fill="#8479e2"/>
<rect x="453.7" y="302.8" width="5.4" height="6.0" fill="#8479e2"/>
<rect x="461.1" y="302.8" width="5.4" height="6.0" fill="#8479e2"/>
<rect x="453.7" y="314.1" width="5.4" height="7.2" fill="#8479e2"/>
<rect x="461.1" y="314.1" width="5.4" height="7.2" fill="#8479e2"/>
<rect x="440.1" y="331.1" width="7.2" height="4.9" fill="#8479e2"/>
<rect x="440.1" y="338.0" width="7.2" height="4.8" fill="#8479e2"/>
<rect x="453.7" y="331.1" width="4.9" height="7.2" fill="#8479e2"/>
<rect x="460.6" y="331.1" width="4.9" height="7.2" fill="#8479e2"/>
<circle cx="496.4" cy="334.8" r="3.8" fill="#8479e2"/>
<polyline points="431.8,294.5 440.0,294.0 460.0,294.0 466.0,298.0 469.0,302.0" fill="none" stroke="#7a70d6" stroke-width="2.1" stroke-linejoin="round" stroke-linecap="round"/>
<polyline points="431.8,310.3 440.0,310.0 452.0,306.0" fill="none" stroke="#7a70d6" stroke-width="2.1" stroke-linejoin="round" stroke-linecap="round"/>
<polyline points="431.8,326.2 438.6,326.2" fill="none" stroke="#7a70d6" stroke-width="2.1" stroke-linejoin="round" stroke-linecap="round"/>
<polyline points="431.8,342.1 440.0,340.0" fill="none" stroke="#7a70d6" stroke-width="2.1" stroke-linejoin="round" stroke-linecap="round"/>
<polyline points="452.2,334.1 496.4,334.1" fill="none" stroke="#7a70d6" stroke-width="2.1" stroke-linejoin="round" stroke-linecap="round"/>
<polyline points="462.4,339.8 469.2,348.9 520.0,349.0 540.0,349.0" fill="none" stroke="#7a70d6" stroke-width="2.1" stroke-linejoin="round" stroke-linecap="round"/>
<circle cx="368.3" cy="329.6" r="3.8" fill="#8479e2"/>
<circle cx="367.7" cy="370.4" r="2.3" fill="#8479e2"/>
<circle cx="575.3" cy="161.7" r="2.3" fill="#8479e2"/>
<circle cx="575.3" cy="217.5" r="2.3" fill="#8479e2"/>
<circle cx="575.3" cy="272.4" r="2.3" fill="#8479e2"/>
<circle cx="620.1" cy="162.4" r="3.8" fill="#8479e2"/>
<polyline points="504.8,155.6 513.9,156.7 521.8,164.7 521.8,178.3 529.8,182.8 552.4,182.8 553.6,186.2" fill="none" stroke="#7a70d6" stroke-width="2.6" stroke-linejoin="round" stroke-linecap="round"/>
<rect x="495.0" y="148.0" width="9.5" height="8.0" fill="#8479e2"/>
<rect x="495.0" y="165.0" width="9.5" height="7.5" fill="#8479e2"/>
<polyline points="486.7,165.8 500.3,178.3 515.0,184.0 515.0,204.4 520.7,208.9 529.8,210.0" fill="none" stroke="#7a70d6" stroke-width="2.1" stroke-linejoin="round" stroke-linecap="round"/>
<polyline points="534.0,193.0 534.0,200.0" fill="none" stroke="#7a70d6" stroke-width="2.1" stroke-linejoin="round" stroke-linecap="round"/>
<polyline points="545.0,193.0 545.0,200.0" fill="none" stroke="#7a70d6" stroke-width="2.1" stroke-linejoin="round" stroke-linecap="round"/>
<polyline points="554.0,193.0 554.0,200.0" fill="none" stroke="#7a70d6" stroke-width="2.1" stroke-linejoin="round" stroke-linecap="round"/>
<rect x="529.2" y="204.7" width="4.3" height="8.3" fill="#8479e2"/>
<rect x="535.5" y="204.7" width="4.3" height="8.3" fill="#8479e2"/>
<rect x="546.2" y="204.7" width="4.3" height="8.3" fill="#8479e2"/>
<rect x="552.5" y="204.7" width="4.3" height="8.3" fill="#8479e2"/>
<rect x="538.2" y="218.3" width="4.3" height="6.1" fill="#8479e2"/>
<rect x="544.5" y="218.3" width="4.3" height="6.1" fill="#8479e2"/>
<rect x="515.5" y="234.2" width="7.3" height="6.6" fill="#8479e2"/>
<rect x="515.5" y="243.9" width="7.3" height="6.6" fill="#8479e2"/>
<rect x="528.0" y="234.2" width="7.2" height="6.6" fill="#8479e2"/>
<rect x="528.0" y="243.9" width="7.2" height="6.6" fill="#8479e2"/>
<rect x="542.8" y="230.8" width="9.4" height="9.0" fill="#8479e2"/>
<rect x="542.8" y="243.7" width="9.4" height="9.0" fill="#8479e2"/>
<rect x="559.8" y="231.9" width="6.0" height="4.8" fill="#8479e2"/>
<rect x="559.8" y="238.8" width="6.0" height="4.8" fill="#8479e2"/>
<circle cx="519.0" cy="258.0" r="2.3" fill="#8479e2"/>
<circle cx="531.0" cy="258.0" r="2.3" fill="#8479e2"/>
<circle cx="547.0" cy="258.0" r="2.3" fill="#8479e2"/>
<circle cx="563.0" cy="249.0" r="2.3" fill="#8479e2"/>
<polyline points="514.0,247.0 519.0,258.0" fill="none" stroke="#7a70d6" stroke-width="2.1" stroke-linejoin="round" stroke-linecap="round"/>
<polyline points="547.0,254.0 547.0,258.0" fill="none" stroke="#7a70d6" stroke-width="2.1" stroke-linejoin="round" stroke-linecap="round"/>
<polyline points="524.0,236.0 556.0,234.0 563.0,236.0" fill="none" stroke="#7a70d6" stroke-width="2.1" stroke-linejoin="round" stroke-linecap="round"/>
<circle cx="630.2" cy="258.1" r="3.3" fill="#8479e2"/>
<circle cx="630.2" cy="266.9" r="3.3" fill="#8479e2"/>
<circle cx="630.2" cy="275.6" r="3.3" fill="#8479e2"/>
<circle cx="630.2" cy="284.4" r="3.3" fill="#8479e2"/>
<circle cx="630.2" cy="293.1" r="3.3" fill="#8479e2"/>
<circle cx="630.2" cy="301.9" r="3.3" fill="#8479e2"/>
<circle cx="630.2" cy="310.6" r="3.3" fill="#8479e2"/>
<circle cx="630.2" cy="319.4" r="3.3" fill="#8479e2"/>
<circle cx="630.2" cy="328.1" r="3.3" fill="#8479e2"/>
<circle cx="630.2" cy="336.9" r="3.3" fill="#8479e2"/>
<circle cx="630.2" cy="345.6" r="3.3" fill="#8479e2"/>
<circle cx="630.2" cy="354.4" r="3.3" fill="#8479e2"/>
<rect x="636.4" y="249.7" width="6.5" height="6.5" fill="#8479e2"/>
<circle cx="639.6" cy="261.8" r="3.3" fill="#8479e2"/>
<circle cx="639.6" cy="270.6" r="3.3" fill="#8479e2"/>
<circle cx="639.6" cy="279.5" r="3.3" fill="#8479e2"/>
<circle cx="639.6" cy="288.4" r="3.3" fill="#8479e2"/>
<circle cx="639.6" cy="297.2" r="3.3" fill="#8479e2"/>
<circle cx="639.6" cy="306.1" r="3.3" fill="#8479e2"/>
<circle cx="639.6" cy="315.0" r="3.3" fill="#8479e2"/>
<circle cx="639.6" cy="323.9" r="3.3" fill="#8479e2"/>
<circle cx="639.6" cy="332.7" r="3.3" fill="#8479e2"/>
<circle cx="639.6" cy="341.6" r="3.3" fill="#8479e2"/>
<circle cx="639.6" cy="350.5" r="3.3" fill="#8479e2"/>
<circle cx="639.6" cy="359.3" r="3.3" fill="#8479e2"/>
<circle cx="635.2" cy="379.7" r="10.2" fill="#8479e2"/>
<polyline points="670.0,211.0 661.4,220.2 661.4,265.0 661.0,300.0" fill="none" stroke="#7a70d6" stroke-width="2.1" stroke-linejoin="round" stroke-linecap="round"/>
<circle cx="758.8" cy="162.4" r="10.6" fill="#8479e2"/>
<rect x="703.9" y="154.4" width="7.0" height="7.0" fill="#8479e2"/>
<rect x="713.0" y="154.4" width="7.0" height="7.0" fill="#8479e2"/>
<rect x="720.9" y="154.4" width="7.0" height="7.0" fill="#8479e2"/>
<rect x="729.5" y="154.4" width="7.0" height="7.0" fill="#8479e2"/>
<rect x="698.2" y="163.0" width="7.0" height="7.0" fill="#8479e2"/>
<circle cx="711.3" cy="166.5" r="3.6" fill="#8479e2"/>
<circle cx="719.9" cy="166.5" r="3.6" fill="#8479e2"/>
<circle cx="728.5" cy="166.5" r="3.6" fill="#8479e2"/>
<circle cx="737.5" cy="166.5" r="3.6" fill="#8479e2"/>
<circle cx="803.7" cy="150.4" r="10.2" fill="#8479e2"/>
<circle cx="791.9" cy="186.2" r="2.0" fill="#8479e2"/>
<circle cx="675.7" cy="194.1" r="3.8" fill="#8479e2"/>
<rect x="693.0" y="191.1" width="4.9" height="6.1" fill="#8479e2"/>
<rect x="699.9" y="191.1" width="4.9" height="6.1" fill="#8479e2"/>
<rect x="716.8" y="191.1" width="5.2" height="6.1" fill="#8479e2"/>
<rect x="724.0" y="191.1" width="5.2" height="6.1" fill="#8479e2"/>
<polyline points="675.7,194.1 715.0,194.1" fill="none" stroke="#7a70d6" stroke-width="2.1" stroke-linejoin="round" stroke-linecap="round"/>
<polyline points="701.7,166.5 701.7,204.3 697.2,208.9 670.0,208.9 660.0,215.0" fill="none" stroke="#7a70d6" stroke-width="2.1" stroke-linejoin="round" stroke-linecap="round"/>
<polyline points="728.5,166.5 728.5,184.0 725.5,192.0" fill="none" stroke="#7a70d6" stroke-width="2.1" stroke-linejoin="round" stroke-linecap="round"/>
<circle cx="756.1" cy="194.8" r="3.8" fill="#8479e2"/>
<rect x="752.0" y="208.1" width="7.2" height="4.8" fill="#8479e2"/>
<rect x="752.0" y="214.9" width="7.2" height="4.9" fill="#8479e2"/>
<polyline points="756.1,194.8 756.1,207.0" fill="none" stroke="#7a70d6" stroke-width="2.1" stroke-linejoin="round" stroke-linecap="round"/>
<rect x="770.2" y="209.3" width="9.0" height="9.0" fill="#8479e2"/>
<circle cx="792.4" cy="214.5" r="4.5" fill="#8479e2"/>
<polyline points="756.0,220.0 765.0,214.0 774.7,213.8" fill="none" stroke="#7a70d6" stroke-width="2.1" stroke-linejoin="round" stroke-linecap="round"/>
<circle cx="723.3" cy="211.0" r="3.0" fill="#8479e2"/>
<rect x="720.0" y="213.0" width="7.0" height="11.0" fill="#8479e2"/>
<circle cx="740.7" cy="229.7" r="3.5" fill="#8479e2"/>
<circle cx="775.4" cy="229.7" r="3.5" fill="#8479e2"/>
<polyline points="756.0,220.0 756.0,228.0 749.0,229.7 740.7,229.7" fill="none" stroke="#7a70d6" stroke-width="2.1" stroke-linejoin="round" stroke-linecap="round"/>
<rect x="788.2" y="228.0" width="6.1" height="5.1" fill="#8479e2"/>
<rect x="788.2" y="235.1" width="6.1" height="5.1" fill="#8479e2"/>
<polyline points="775.4,229.7 778.0,237.0 790.0,238.0" fill="none" stroke="#7a70d6" stroke-width="2.1" stroke-linejoin="round" stroke-linecap="round"/>
<polyline points="792.4,214.5 792.4,226.0" fill="none" stroke="#7a70d6" stroke-width="2.1" stroke-linejoin="round" stroke-linecap="round"/>
<polyline points="670.0,222.0 680.0,220.0 720.0,220.0" fill="none" stroke="#7a70d6" stroke-width="2.1" stroke-linejoin="round" stroke-linecap="round"/>
<rect x="678.3" y="253.5" width="4.9" height="7.0" fill="#8479e2"/>
<rect x="685.1" y="253.5" width="4.9" height="7.0" fill="#8479e2"/>
<rect x="702.1" y="253.5" width="4.9" height="7.0" fill="#8479e2"/>
<rect x="709.0" y="253.5" width="4.9" height="7.0" fill="#8479e2"/>
<rect x="725.9" y="253.5" width="4.9" height="7.0" fill="#8479e2"/>
<rect x="732.8" y="253.5" width="4.9" height="7.0" fill="#8479e2"/>
<rect x="687.5" y="235.0" width="8.2" height="13.0" fill="#8479e2"/>
<rect x="707.8" y="236.3" width="7.2" height="4.9" fill="#8479e2"/>
<rect x="707.8" y="243.2" width="7.2" height="4.9" fill="#8479e2"/>
<polyline points="692.0,234.0 745.0,245.0 748.0,258.0" fill="none" stroke="#7a70d6" stroke-width="2.1" stroke-linejoin="round" stroke-linecap="round"/>
<rect x="676.0" y="276.5" width="7.2" height="4.5" fill="#8479e2"/>
<rect x="676.0" y="283.0" width="7.2" height="4.5" fill="#8479e2"/>
<rect x="687.4" y="276.5" width="7.2" height="4.5" fill="#8479e2"/>
<rect x="687.4" y="283.0" width="7.2" height="4.5" fill="#8479e2"/>
<rect x="699.8" y="276.5" width="7.2" height="4.5" fill="#8479e2"/>
<rect x="699.8" y="283.0" width="7.2" height="4.5" fill="#8479e2"/>
<rect x="712.3" y="276.5" width="7.2" height="4.5" fill="#8479e2"/>
<rect x="712.3" y="283.0" width="7.2" height="4.5" fill="#8479e2"/>
<rect x="723.6" y="276.5" width="7.2" height="4.5" fill="#8479e2"/>
<rect x="723.6" y="283.0" width="7.2" height="4.5" fill="#8479e2"/>
<rect x="736.1" y="276.5" width="7.2" height="4.5" fill="#8479e2"/>
<rect x="736.1" y="283.0" width="7.2" height="4.5" fill="#8479e2"/>
<circle cx="691.0" cy="292.0" r="2.3" fill="#8479e2"/>
<circle cx="700.0" cy="292.0" r="2.3" fill="#8479e2"/>
<circle cx="715.0" cy="292.0" r="2.3" fill="#8479e2"/>
<circle cx="740.0" cy="292.0" r="2.3" fill="#8479e2"/>
<rect x="700.5" y="298.8" width="6.0" height="6.0" fill="#8479e2"/>
<circle cx="711.3" cy="301.8" r="3.0" fill="#8479e2"/>
<circle cx="783.3" cy="274.1" r="3.5" fill="#8479e2"/>
<circle cx="791.9" cy="274.1" r="3.5" fill="#8479e2"/>
<circle cx="783.3" cy="282.0" r="3.5" fill="#8479e2"/>
<circle cx="791.9" cy="282.0" r="3.5" fill="#8479e2"/>
<circle cx="783.3" cy="289.5" r="3.5" fill="#8479e2"/>
<circle cx="791.9" cy="289.5" r="3.5" fill="#8479e2"/>
<rect x="779.8" y="286.0" width="7.0" height="7.0" fill="#8479e2"/>
<circle cx="783.3" cy="318.3" r="3.5" fill="#8479e2"/>
<circle cx="791.9" cy="318.3" r="3.5" fill="#8479e2"/>
<circle cx="783.3" cy="326.2" r="3.5" fill="#8479e2"/>
<circle cx="791.9" cy="326.2" r="3.5" fill="#8479e2"/>
<circle cx="783.3" cy="333.7" r="3.5" fill="#8479e2"/>
<circle cx="791.9" cy="333.7" r="3.5" fill="#8479e2"/>
<circle cx="783.3" cy="341.6" r="3.5" fill="#8479e2"/>
<circle cx="791.9" cy="341.6" r="3.5" fill="#8479e2"/>
<circle cx="783.3" cy="350.0" r="3.5" fill="#8479e2"/>
<circle cx="791.9" cy="350.0" r="3.5" fill="#8479e2"/>
<circle cx="783.3" cy="357.5" r="3.5" fill="#8479e2"/>
<circle cx="791.9" cy="357.5" r="3.5" fill="#8479e2"/>
<circle cx="783.3" cy="365.2" r="3.5" fill="#8479e2"/>
<circle cx="791.9" cy="365.2" r="3.5" fill="#8479e2"/>
<rect x="779.8" y="361.7" width="7.0" height="7.0" fill="#8479e2"/>
<circle cx="704.5" cy="330.3" r="10.2" fill="#8479e2"/>
<polyline points="641.0,322.9 671.8,322.9 694.4,347.8 708.6,347.8 738.6,325.9 783.5,325.9" fill="none" stroke="#7a70d6" stroke-width="2" stroke-linejoin="round" stroke-linecap="round"/>
<polyline points="641.0,337.5 674.2,337.5 694.4,357.6 709.8,357.6 731.8,341.8 783.5,341.8" fill="none" stroke="#7a70d6" stroke-width="2" stroke-linejoin="round" stroke-linecap="round"/>
<polyline points="641.0,352.1 676.6,352.1 694.4,367.4 711.0,367.4 725.0,357.6 783.5,357.6" fill="none" stroke="#7a70d6" stroke-width="2" stroke-linejoin="round" stroke-linecap="round"/>
<polyline points="641.0,279.7 751.0,277.2 762.4,289.7 783.5,289.7" fill="none" stroke="#7a70d6" stroke-width="2" stroke-linejoin="round" stroke-linecap="round"/>
<polyline points="665.0,250.0 665.0,281.7 692.0,314.6 785.0,314.6 789.6,310.0 789.6,263.6 776.0,262.0" fill="none" stroke="#7a70d6" stroke-width="2" stroke-linejoin="round" stroke-linecap="round"/>
<polyline points="641.0,262.2 676.0,262.2 680.0,270.0 680.0,300.0" fill="none" stroke="#7a70d6" stroke-width="2" stroke-linejoin="round" stroke-linecap="round"/>
<polyline points="630.8,293.3 600.2,293.3" fill="none" stroke="#7a70d6" stroke-width="2.1" stroke-linejoin="round" stroke-linecap="round"/>
<rect x="599.4" y="289.2" width="4.3" height="7.2" fill="#8479e2"/>
<rect x="605.7" y="289.2" width="4.3" height="7.2" fill="#8479e2"/>
<circle cx="601.3" cy="301.3" r="2.3" fill="#8479e2"/>
<rect x="659.5" y="290.3" width="7.2" height="6.6" fill="#8479e2"/>
<rect x="659.5" y="298.9" width="7.2" height="6.5" fill="#8479e2"/>
<polyline points="505.0,347.7 566.2,347.7 577.5,338.7 613.8,338.7 630.8,339.8" fill="none" stroke="#7a70d6" stroke-width="2.1" stroke-linejoin="round" stroke-linecap="round"/>
<circle cx="559.4" cy="338.0" r="2.3" fill="#8479e2"/>
<circle cx="575.7" cy="274.1" r="2.3" fill="#8479e2"/>
<circle cx="587.7" cy="350.0" r="4.5" fill="#8479e2"/>
<rect x="599.5" y="345.5" width="9.0" height="9.0" fill="#8479e2"/>
<rect x="597.0" y="361.5" width="12.0" height="7.5" fill="#8479e2"/>
<polyline points="587.7,350.0 587.7,359.0 598.0,364.0" fill="none" stroke="#7a70d6" stroke-width="2.1" stroke-linejoin="round" stroke-linecap="round"/>
<polyline points="604.0,350.0 604.0,362.0" fill="none" stroke="#7a70d6" stroke-width="2.1" stroke-linejoin="round" stroke-linecap="round"/>
<rect x="535.6" y="361.3" width="7.9" height="40.8" fill="#8479e2"/>
<rect x="495.0" y="370.1" width="10.0" height="5.0" fill="#8479e2"/>
<rect x="495.0" y="378.9" width="10.0" height="5.0" fill="#8479e2"/>
<rect x="495.0" y="386.9" width="10.0" height="5.0" fill="#8479e2"/>
<circle cx="563.9" cy="377.0" r="3.0" fill="#8479e2"/>
<rect x="561.0" y="381.0" width="6.0" height="8.0" fill="#8479e2"/>
<polyline points="573.1,386.6 583.6,392.4 584.3,420.0 584.3,484.3 595.7,494.5 670.0,494.5" fill="none" stroke="#7a70d6" stroke-width="2.1" stroke-linejoin="round" stroke-linecap="round"/>
<polyline points="498.6,389.4 498.6,404.0 503.3,408.7 559.2,408.7 567.3,401.7 567.3,381.9 563.8,377.3" fill="none" stroke="#7a70d6" stroke-width="2.1" stroke-linejoin="round" stroke-linecap="round"/>
<polyline points="480.0,348.1 566.1,348.1 577.8,340.0" fill="none" stroke="#7a70d6" stroke-width="2.1" stroke-linejoin="round" stroke-linecap="round"/>
<circle cx="432.0" cy="378.9" r="3.5" fill="#8479e2"/>
<rect x="444.6" y="375.1" width="7.5" height="7.5" fill="#8479e2"/>
<rect x="427.0" y="392.0" width="12.0" height="10.0" fill="#8479e2"/>
<rect x="440.0" y="392.0" width="10.0" height="10.0" fill="#8479e2"/>
<circle cx="471.5" cy="393.0" r="3.0" fill="#8479e2"/>
<rect x="468.5" y="394.0" width="6.0" height="10.0" fill="#8479e2"/>
<polyline points="448.3,378.9 447.5,393.0" fill="none" stroke="#7a70d6" stroke-width="2.1" stroke-linejoin="round" stroke-linecap="round"/>
<polyline points="453.0,396.2 458.2,400.9 483.4,400.9 483.4,376.8 487.6,372.6 495.0,372.6" fill="none" stroke="#7a70d6" stroke-width="2.1" stroke-linejoin="round" stroke-linecap="round"/>
<polyline points="420.0,397.0 425.0,397.0" fill="none" stroke="#7a70d6" stroke-width="2.1" stroke-linejoin="round" stroke-linecap="round"/>
<circle cx="364.5" cy="509.7" r="10.2" fill="#8479e2"/>
<circle cx="391.7" cy="497.5" r="2.3" fill="#8479e2"/>
<circle cx="487.8" cy="505.4" r="2.3" fill="#8479e2"/>
<circle cx="368.3" cy="448.5" r="4.3" fill="#8479e2"/>
<rect x="381.1" y="444.2" width="8.5" height="8.5" fill="#8479e2"/>
<circle cx="368.3" cy="462.1" r="4.3" fill="#8479e2"/>
<circle cx="385.3" cy="462.1" r="4.3" fill="#8479e2"/>
<circle cx="368.3" cy="475.7" r="4.3" fill="#8479e2"/>
<circle cx="385.3" cy="475.7" r="4.3" fill="#8479e2"/>
<rect x="400.0" y="441.6" width="7.0" height="8.5" fill="#8479e2"/>
<rect x="409.0" y="441.6" width="7.0" height="8.5" fill="#8479e2"/>
<rect x="400.0" y="457.5" width="7.0" height="8.5" fill="#8479e2"/>
<rect x="409.0" y="457.5" width="7.0" height="8.5" fill="#8479e2"/>
<rect x="400.0" y="473.4" width="7.0" height="8.5" fill="#8479e2"/>
<rect x="409.0" y="473.4" width="7.0" height="8.5" fill="#8479e2"/>
<circle cx="431.8" cy="431.1" r="3.5" fill="#8479e2"/>
<rect x="444.2" y="427.6" width="7.0" height="7.0" fill="#8479e2"/>
<rect x="428.0" y="445.0" width="9.0" height="10.0" fill="#8479e2"/>
<rect x="442.0" y="445.0" width="9.0" height="10.0" fill="#8479e2"/>
<circle cx="431.8" cy="483.2" r="3.5" fill="#8479e2"/>
<rect x="444.2" y="479.7" width="7.0" height="7.0" fill="#8479e2"/>
<rect x="427.0" y="496.0" width="10.0" height="11.0" fill="#8479e2"/>
<rect x="441.0" y="496.0" width="10.0" height="11.0" fill="#8479e2"/>
<circle cx="471.5" cy="450.0" r="3.0" fill="#8479e2"/>
<rect x="468.5" y="451.0" width="6.0" height="9.0" fill="#8479e2"/>
<circle cx="471.5" cy="490.0" r="3.0" fill="#8479e2"/>
<rect x="468.5" y="491.0" width="6.0" height="9.0" fill="#8479e2"/>
<polyline points="391.0,448.5 401.0,444.0" fill="none" stroke="#7a70d6" stroke-width="2.1" stroke-linejoin="round" stroke-linecap="round"/>
<polyline points="416.0,444.0 426.0,449.0" fill="none" stroke="#7a70d6" stroke-width="2.1" stroke-linejoin="round" stroke-linecap="round"/>
<polyline points="447.7,431.1 447.7,450.0" fill="none" stroke="#7a70d6" stroke-width="2.1" stroke-linejoin="round" stroke-linecap="round"/>
<polyline points="452.0,449.7 471.5,449.7 483.0,441.0 505.0,440.0" fill="none" stroke="#7a70d6" stroke-width="2.1" stroke-linejoin="round" stroke-linecap="round"/>
<polyline points="447.7,483.2 447.7,501.0" fill="none" stroke="#7a70d6" stroke-width="2.1" stroke-linejoin="round" stroke-linecap="round"/>
<polyline points="452.0,501.0 462.0,497.0 471.5,496.0" fill="none" stroke="#7a70d6" stroke-width="2.1" stroke-linejoin="round" stroke-linecap="round"/>
<polyline points="421.0,502.0 428.0,502.0" fill="none" stroke="#7a70d6" stroke-width="2.1" stroke-linejoin="round" stroke-linecap="round"/>
<polyline points="416.0,476.0 424.0,478.0" fill="none" stroke="#7a70d6" stroke-width="2.1" stroke-linejoin="round" stroke-linecap="round"/>
<polyline points="416.0,461.0 420.0,461.0" fill="none" stroke="#7a70d6" stroke-width="2.1" stroke-linejoin="round" stroke-linecap="round"/>
<rect x="495.3" y="431.1" width="10.1" height="5.2" fill="#8479e2"/>
<rect x="495.3" y="438.9" width="10.1" height="5.2" fill="#8479e2"/>
<rect x="495.3" y="447.6" width="10.1" height="5.2" fill="#8479e2"/>
<polyline points="500.0,450.0 503.5,470.0" fill="none" stroke="#7a70d6" stroke-width="2.1" stroke-linejoin="round" stroke-linecap="round"/>
<circle cx="488.0" cy="434.0" r="2.5" fill="#8479e2"/>
<rect x="499.0" y="472.0" width="6.0" height="12.0" fill="#8479e2"/>
<polyline points="495.0,441.3 531.0,441.3" fill="none" stroke="#7a70d6" stroke-width="2.1" stroke-linejoin="round" stroke-linecap="round"/>
<circle cx="551.5" cy="505.4" r="2.3" fill="#8479e2"/>
<circle cx="591.1" cy="449.7" r="2.3" fill="#8479e2"/>
<circle cx="630.8" cy="505.4" r="2.3" fill="#8479e2"/>
<circle cx="587.7" cy="505.9" r="3.8" fill="#8479e2"/>
<circle cx="611.1" cy="414.1" r="3.5" fill="#8479e2"/>
<circle cx="619.5" cy="414.1" r="3.5" fill="#8479e2"/>
<circle cx="611.1" cy="421.3" r="3.5" fill="#8479e2"/>
<circle cx="619.5" cy="421.3" r="3.5" fill="#8479e2"/>
<circle cx="611.1" cy="428.8" r="3.5" fill="#8479e2"/>
<circle cx="619.5" cy="428.8" r="3.5" fill="#8479e2"/>
<rect x="616.0" y="410.6" width="7.0" height="7.0" fill="#8479e2"/>
<rect x="609.6" y="446.2" width="4.9" height="7.2" fill="#8479e2"/>
<rect x="616.5" y="446.2" width="4.9" height="7.2" fill="#8479e2"/>
<rect x="596.7" y="463.0" width="6.5" height="12.0" fill="#8479e2"/>
<rect x="608.0" y="463.0" width="6.6" height="12.0" fill="#8479e2"/>
<rect x="619.8" y="463.0" width="6.5" height="12.0" fill="#8479e2"/>
<rect x="631.6" y="463.0" width="7.4" height="12.0" fill="#8479e2"/>
<polyline points="611.1,428.8 611.1,449.7" fill="none" stroke="#7a70d6" stroke-width="2.1" stroke-linejoin="round" stroke-linecap="round"/>
<polyline points="619.5,428.8 619.5,449.7" fill="none" stroke="#7a70d6" stroke-width="2.1" stroke-linejoin="round" stroke-linecap="round"/>
<polyline points="615.0,454.9 611.0,466.0" fill="none" stroke="#7a70d6" stroke-width="2.1" stroke-linejoin="round" stroke-linecap="round"/>
<polyline points="622.0,449.0 632.0,466.0" fill="none" stroke="#7a70d6" stroke-width="2.1" stroke-linejoin="round" stroke-linecap="round"/>
<polyline points="652.5,479.7 652.5,425.3 661.6,414.0 679.7,414.0" fill="none" stroke="#7a70d6" stroke-width="2.1" stroke-linejoin="round" stroke-linecap="round"/>
<polyline points="600.0,476.0 600.0,484.0 610.0,488.0 700.0,488.0 720.0,478.0" fill="none" stroke="#7a70d6" stroke-width="2.1" stroke-linejoin="round" stroke-linecap="round"/>
<polyline points="658.0,470.0 658.0,430.0 670.0,420.0 680.0,420.0" fill="none" stroke="#7a70d6" stroke-width="2.1" stroke-linejoin="round" stroke-linecap="round"/>
<polyline points="640.0,476.0 655.0,483.0 690.0,483.0" fill="none" stroke="#7a70d6" stroke-width="2.1" stroke-linejoin="round" stroke-linecap="round"/>
<polyline points="688.7,409.5 688.7,393.6 697.8,389.7 767.5,389.7 774.3,398.7 774.0,470.0 783.8,477.5" fill="none" stroke="#7a70d6" stroke-width="2.1" stroke-linejoin="round" stroke-linecap="round"/>
<rect x="662.2" y="489.0" width="10.0" height="10.0" fill="#8479e2"/>
<rect x="662.2" y="505.0" width="10.0" height="8.0" fill="#8479e2"/>
<circle cx="803.7" cy="509.7" r="10.2" fill="#8479e2"/>
<circle cx="791.9" cy="425.9" r="2.0" fill="#8479e2"/>
<circle cx="727.8" cy="505.9" r="2.3" fill="#8479e2"/>
<circle cx="783.3" cy="444.8" r="3.4" fill="#8479e2"/>
<circle cx="792.3" cy="444.8" r="3.4" fill="#8479e2"/>
<circle cx="783.3" cy="453.3" r="3.4" fill="#8479e2"/>
<circle cx="792.3" cy="453.3" r="3.4" fill="#8479e2"/>
<circle cx="783.3" cy="461.9" r="3.4" fill="#8479e2"/>
<circle cx="792.3" cy="461.9" r="3.4" fill="#8479e2"/>
<circle cx="783.3" cy="470.2" r="3.4" fill="#8479e2"/>
<circle cx="792.3" cy="470.2" r="3.4" fill="#8479e2"/>
<circle cx="783.3" cy="477.9" r="3.4" fill="#8479e2"/>
<circle cx="792.3" cy="477.9" r="3.4" fill="#8479e2"/>
<rect x="779.8" y="474.4" width="7.0" height="7.0" fill="#8479e2"/>
<rect x="677.6" y="409.0" width="9.0" height="6.0" fill="#8479e2"/>
<rect x="712.5" y="409.0" width="9.1" height="6.0" fill="#8479e2"/>
<rect x="677.6" y="416.4" width="9.0" height="6.0" fill="#8479e2"/>
<rect x="712.5" y="416.4" width="9.1" height="6.0" fill="#8479e2"/>
<rect x="677.6" y="423.8" width="9.0" height="6.0" fill="#8479e2"/>
<rect x="712.5" y="423.8" width="9.1" height="6.0" fill="#8479e2"/>
<rect x="677.6" y="431.2" width="9.0" height="6.0" fill="#8479e2"/>
<rect x="712.5" y="431.2" width="9.1" height="6.0" fill="#8479e2"/>
<rect x="677.6" y="438.6" width="9.0" height="6.0" fill="#8479e2"/>
<rect x="712.5" y="438.6" width="9.1" height="6.0" fill="#8479e2"/>
<rect x="677.6" y="446.0" width="9.0" height="6.0" fill="#8479e2"/>
<rect x="712.5" y="446.0" width="9.1" height="6.0" fill="#8479e2"/>
<rect x="677.6" y="453.4" width="9.0" height="6.0" fill="#8479e2"/>
<rect x="712.5" y="453.4" width="9.1" height="6.0" fill="#8479e2"/>
<rect x="677.6" y="460.8" width="9.0" height="6.0" fill="#8479e2"/>
<rect x="712.5" y="460.8" width="9.1" height="6.0" fill="#8479e2"/>
<rect x="697.2" y="398.3" width="5.2" height="6.1" fill="#8479e2"/>
<rect x="704.5" y="398.3" width="5.2" height="6.1" fill="#8479e2"/>
<rect x="729.5" y="410.0" width="5.0" height="7.3" fill="#8479e2"/>
<rect x="736.0" y="410.0" width="5.0" height="7.3" fill="#8479e2"/>
<rect x="729.5" y="421.7" width="5.0" height="7.3" fill="#8479e2"/>
<rect x="736.0" y="421.7" width="5.0" height="7.3" fill="#8479e2"/>
<rect x="729.5" y="433.3" width="5.0" height="7.3" fill="#8479e2"/>
<rect x="736.0" y="433.3" width="5.0" height="7.3" fill="#8479e2"/>
<rect x="729.5" y="446.3" width="5.0" height="7.3" fill="#8479e2"/>
<rect x="736.0" y="446.3" width="5.0" height="7.3" fill="#8479e2"/>
<rect x="729.5" y="457.9" width="5.0" height="7.3" fill="#8479e2"/>
<rect x="736.0" y="457.9" width="5.0" height="7.3" fill="#8479e2"/>
<rect x="729.5" y="469.6" width="5.0" height="7.3" fill="#8479e2"/>
<rect x="736.0" y="469.6" width="5.0" height="7.3" fill="#8479e2"/>
<circle cx="746.0" cy="413.5" r="2.3" fill="#8479e2"/>
<circle cx="746.0" cy="449.0" r="2.3" fill="#8479e2"/>
<circle cx="746.0" cy="473.0" r="2.3" fill="#8479e2"/>
<circle cx="763.0" cy="461.0" r="2.3" fill="#8479e2"/>
<polyline points="721.6,412.0 728.0,413.5" fill="none" stroke="#7a70d6" stroke-width="2.1" stroke-linejoin="round" stroke-linecap="round"/>
<polyline points="721.6,434.0 746.0,437.0" fill="none" stroke="#7a70d6" stroke-width="2.1" stroke-linejoin="round" stroke-linecap="round"/>
<polyline points="721.6,449.0 728.0,449.0" fill="none" stroke="#7a70d6" stroke-width="2.1" stroke-linejoin="round" stroke-linecap="round"/>
<polyline points="742.0,437.0 760.0,440.0 763.0,445.0 763.0,461.0" fill="none" stroke="#7a70d6" stroke-width="2.1" stroke-linejoin="round" stroke-linecap="round"/>
<polyline points="721.6,463.0 725.0,475.0 728.0,478.0" fill="none" stroke="#7a70d6" stroke-width="2.1" stroke-linejoin="round" stroke-linecap="round"/>
<polyline points="689.2,395.5 694.4,390.4 766.9,390.4 773.4,398.1 773.4,473.3 781.2,477.2" fill="none" stroke="#7a70d6" stroke-width="2.1" stroke-linejoin="round" stroke-linecap="round"/>
<polyline points="710.0,483.6 787.7,486.2 791.6,479.7" fill="none" stroke="#7a70d6" stroke-width="2.1" stroke-linejoin="round" stroke-linecap="round"/>
<polyline points="704.8,501.8 787.7,501.8 798.0,488.8 798.0,469.4 792.3,468.1" fill="none" stroke="#7a70d6" stroke-width="2.1" stroke-linejoin="round" stroke-linecap="round"/>
<rect x="693.3" y="486.4" width="4.7" height="6.1" fill="#8479e2"/>
<rect x="700.0" y="486.4" width="4.6" height="6.1" fill="#8479e2"/>
<rect x="693.3" y="498.1" width="4.7" height="7.4" fill="#8479e2"/>
<rect x="700.0" y="498.1" width="4.6" height="7.4" fill="#8479e2"/>
<rect x="680.4" y="486.5" width="6.0" height="16.5" fill="#8479e2"/>
<rect x="660.9" y="437.2" width="5.3" height="7.3" fill="#8479e2"/>
<rect x="668.2" y="437.2" width="5.3" height="7.3" fill="#8479e2"/>
<rect x="660.9" y="450.2" width="5.3" height="7.3" fill="#8479e2"/>
<rect x="668.2" y="450.2" width="5.3" height="7.3" fill="#8479e2"/>
<polyline points="640.0,478.0 652.0,478.0 654.0,418.0 664.0,414.0 677.6,414.0" fill="none" stroke="#7a70d6" stroke-width="2.1" stroke-linejoin="round" stroke-linecap="round"/>
<polyline points="656.0,472.0 657.0,430.0 662.0,423.0 677.6,421.5" fill="none" stroke="#7a70d6" stroke-width="2.1" stroke-linejoin="round" stroke-linecap="round"/>
<polyline points="667.0,446.0 667.0,462.0 672.0,470.0 686.0,470.0 695.0,462.0 695.0,445.0 686.6,440.0" fill="none" stroke="#7a70d6" stroke-width="2.1" stroke-linejoin="round" stroke-linecap="round"/>
<polyline points="700.0,470.0 688.0,485.0" fill="none" stroke="#7a70d6" stroke-width="2.1" stroke-linejoin="round" stroke-linecap="round"/>
<polyline points="686.6,436.0 700.0,450.0 700.0,470.0 720.0,478.0 728.0,490.0" fill="none" stroke="#7a70d6" stroke-width="2.1" stroke-linejoin="round" stroke-linecap="round"/>
<polyline points="712.5,420.0 703.0,412.0 703.0,400.0" fill="none" stroke="#7a70d6" stroke-width="2.1" stroke-linejoin="round" stroke-linecap="round"/>
<polyline points="712.5,441.0 700.0,455.0" fill="none" stroke="#7a70d6" stroke-width="2.1" stroke-linejoin="round" stroke-linecap="round"/>
<polyline points="650.0,471.0 653.0,480.0 660.0,485.0" fill="none" stroke="#7a70d6" stroke-width="2.1" stroke-linejoin="round" stroke-linecap="round"/>
<circle cx="685.0" cy="458.0" r="2.3" fill="#8479e2"/>
<circle cx="707.0" cy="486.0" r="2.3" fill="#8479e2"/>
</svg></body></html>
